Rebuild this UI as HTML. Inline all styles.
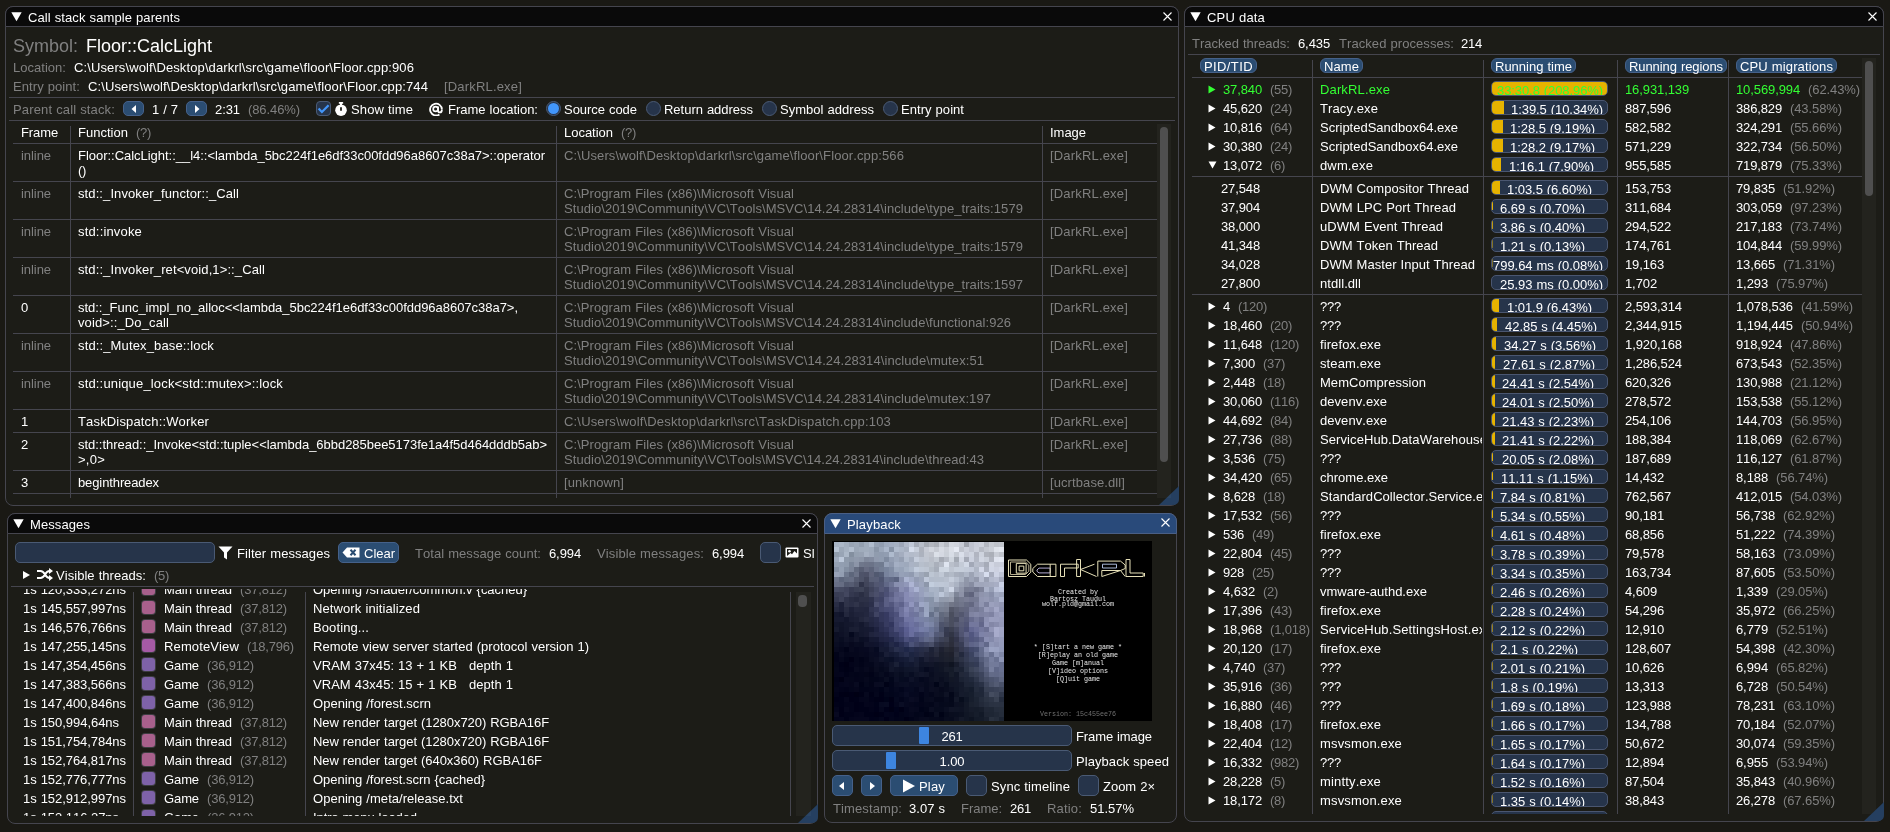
<!DOCTYPE html>
<html><head><meta charset="utf-8"><style>
*{margin:0;padding:0}
html,body{width:1890px;height:832px;overflow:hidden;background:#1a1914}
body{position:relative;font-kerning:none;font-variant-ligatures:none;font-family:"Liberation Sans",sans-serif;font-size:13px;line-height:15px;color:#fff}
#root{position:absolute;left:0;top:0;width:1890px;height:832px;will-change:transform}
.t{position:absolute;white-space:pre}
.r{position:absolute}
.g{color:#808080}
.clip{position:absolute;overflow:hidden}
.win{position:absolute;box-sizing:border-box;border:1px solid #45454e;border-radius:8px;background:#1c1c17}
.tbar{position:absolute;box-sizing:border-box;border:1px solid #45454e;border-radius:8px 8px 0 0}
.btn{position:absolute;box-sizing:border-box;background:#2b4d72;border:1px solid #45618a;border-radius:5px}
.frame{position:absolute;box-sizing:border-box;background:#26344a;border:1px solid #4a5a74;border-radius:5px}
.bar{position:absolute;box-sizing:border-box;width:117px;height:15px;background:#26344a;border:1px solid #4a5670;border-radius:5px;overflow:hidden}
.fill{position:absolute;left:0;top:0;bottom:0;background:#e6b300}
.bt{position:absolute;top:1px;white-space:pre;line-height:15px}
.mono{font-family:"Liberation Mono",monospace;font-size:6.7px;color:#e8e8e8;white-space:pre}
</style></head><body>
<div id="root"><div class="win" style="left:5px;top:6px;width:1174px;height:500px"></div>
<div class="tbar" style="left:5px;top:6px;width:1174px;height:21px;background:#0a0a0a"></div>
<svg class="r" style="left:11px;top:12px" width="11" height="10" viewBox="0 0 11 10"><path d="M0.3 0.2H10.7L5.5 9.3Z" fill="#fff"/></svg>
<div class="t" style="left:28px;top:10px;letter-spacing:0.091px;word-spacing:0.297px">Call stack sample parents</div>
<svg class="r" style="left:1163px;top:12px" width="10" height="10" viewBox="0 0 10 10"><path d="M0.5 0.5L8.5 8.5M8.5 0.5L0.5 8.5" stroke="#fff" stroke-width="1.1"/></svg>
<svg class="r" style="left:1159px;top:486px" width="20" height="20" viewBox="0 0 20 20"><path d="M20 0V13Q20 19 13 19H0Z" fill="#253f60"/></svg>
<div class="t" style="left:13px;top:36px;color:#808080;font-size:18px;line-height:20px">Symbol:</div>
<div class="t" style="left:86px;top:36px;font-size:18px;line-height:20px">Floor::CalcLight</div>
<div class="t" style="left:13px;top:60px;letter-spacing:0.026px;color:#808080">Location:</div>
<div class="t" style="left:74px;top:60px;letter-spacing:0.109px">C:\Users\wolf\Desktop\darkrl\src\game\floor\Floor.cpp:906</div>
<div class="t" style="left:13px;top:79px;letter-spacing:0.078px;word-spacing:0.310px;color:#808080">Entry point:</div>
<div class="t" style="left:88px;top:79px;letter-spacing:0.109px">C:\Users\wolf\Desktop\darkrl\src\game\floor\Floor.cpp:744</div>
<div class="t" style="left:444px;top:79px;letter-spacing:0.178px;color:#808080">[DarkRL.exe]</div>
<div class="r" style="left:9px;top:97px;width:1166px;height:1px;background:#45454e;"></div>
<div class="t" style="left:13px;top:102px;letter-spacing:0.140px;word-spacing:0.248px;color:#808080">Parent call stack:</div>
<div class="btn" style="left:123px;top:101px;width:21px;height:15px"></div>
<svg class="r" style="left:129.5px;top:103.5px" width="8" height="10" viewBox="0 0 8 10"><path d="M1.5 5L6 1V9Z" fill="#fff"/></svg>
<div class="t" style="left:152px;top:102px;letter-spacing:-0.024px;word-spacing:0.412px">1 / 7</div>
<div class="btn" style="left:186px;top:101px;width:21px;height:15px"></div>
<svg class="r" style="left:192.5px;top:103.5px" width="8" height="10" viewBox="0 0 8 10"><path d="M6.5 5L2 1V9Z" fill="#fff"/></svg>
<div class="t" style="left:215px;top:102px;letter-spacing:-0.075px">2:31</div>
<div class="t" style="left:248px;top:102px;letter-spacing:-0.094px;color:#808080">(86.46%)</div>
<div class="frame" style="left:316px;top:101px;width:15px;height:15px;border-radius:4px"></div>
<svg class="r" style="left:316px;top:101px" width="15" height="15" viewBox="0 0 15 15"><path d="M2.6 7.6L5.9 11L12.6 4.2" stroke="#4296fa" stroke-width="2.2" fill="none"/></svg>
<svg class="r" style="left:335px;top:102px" width="12" height="14" viewBox="0 0 12 14"><rect x="3.8" y="0" width="4.4" height="1.8" rx="0.5" fill="#fff"/><rect x="5" y="1" width="2" height="2.6" fill="#fff"/><circle cx="6" cy="8.2" r="5.8" fill="#fff"/><path d="M6 5.2V8.8" stroke="#1c1c17" stroke-width="1.8"/></svg>
<div class="t" style="left:351px;top:102px;letter-spacing:0.115px;word-spacing:0.273px">Show time</div>
<svg class="r" style="left:429px;top:102px" width="14" height="14" viewBox="0 0 14 14"><path d="M10.4 12.4A5.9 5.9 0 1 1 12.9 7.4" stroke="#fff" stroke-width="1.8" fill="none"/><circle cx="6.6" cy="7" r="2.4" stroke="#fff" stroke-width="1.7" fill="none"/><path d="M9.1 4.4V8.4Q9.1 10.4 10.9 10.4Q12.9 10.4 12.9 7.4" stroke="#fff" stroke-width="1.8" fill="none"/></svg>
<div class="t" style="left:448px;top:102px;word-spacing:0.387px">Frame location:</div>
<div class="frame" style="left:546px;top:101px;width:15px;height:15px;border-radius:50%"></div>
<div class="r" style="left:548px;top:103px;width:11px;height:11px;border-radius:50%;background:#4296fa"></div>
<div class="t" style="left:564px;top:102px;letter-spacing:-0.038px;word-spacing:0.426px">Source code</div>
<div class="frame" style="left:646px;top:101px;width:15px;height:15px;border-radius:50%"></div>
<div class="t" style="left:664px;top:102px;letter-spacing:-0.021px;word-spacing:0.409px">Return address</div>
<div class="frame" style="left:762px;top:101px;width:15px;height:15px;border-radius:50%"></div>
<div class="t" style="left:780px;top:102px;letter-spacing:0.031px;word-spacing:0.357px">Symbol address</div>
<div class="frame" style="left:883px;top:101px;width:15px;height:15px;border-radius:50%"></div>
<div class="t" style="left:901px;top:102px;letter-spacing:0.047px;word-spacing:0.341px">Entry point</div>
<div class="r" style="left:9px;top:120px;width:1166px;height:1px;background:#45454e;"></div>
<div class="t" style="left:21px;top:125px;letter-spacing:-0.112px">Frame</div>
<div class="t" style="left:78px;top:125px;letter-spacing:0.017px">Function</div>
<div class="t" style="left:136px;top:125px;letter-spacing:-0.296px;color:#808080">(?)</div>
<div class="t" style="left:564px;top:125px;letter-spacing:-0.019px">Location</div>
<div class="t" style="left:621px;top:125px;letter-spacing:-0.296px;color:#808080">(?)</div>
<div class="t" style="left:1050px;top:125px;letter-spacing:-0.026px">Image</div>
<div class="r" style="left:70px;top:126px;width:1px;height:372px;background:#45454e;"></div>
<div class="r" style="left:556px;top:126px;width:1px;height:372px;background:#45454e;"></div>
<div class="r" style="left:1042px;top:126px;width:1px;height:372px;background:#45454e;"></div>
<div class="r" style="left:13px;top:143px;width:1144px;height:1px;background:#45454e;"></div>
<div class="r" style="left:13px;top:181px;width:1144px;height:1px;background:#45454e;"></div>
<div class="r" style="left:13px;top:219px;width:1144px;height:1px;background:#45454e;"></div>
<div class="r" style="left:13px;top:257px;width:1144px;height:1px;background:#45454e;"></div>
<div class="r" style="left:13px;top:295px;width:1144px;height:1px;background:#45454e;"></div>
<div class="r" style="left:13px;top:333px;width:1144px;height:1px;background:#45454e;"></div>
<div class="r" style="left:13px;top:371px;width:1144px;height:1px;background:#45454e;"></div>
<div class="r" style="left:13px;top:409px;width:1144px;height:1px;background:#45454e;"></div>
<div class="r" style="left:13px;top:432px;width:1144px;height:1px;background:#45454e;"></div>
<div class="r" style="left:13px;top:470px;width:1144px;height:1px;background:#45454e;"></div>
<div class="r" style="left:13px;top:493px;width:1144px;height:1px;background:#45454e;"></div>
<div class="t" style="left:21px;top:148px;letter-spacing:-0.059px;color:#808080">inline</div>
<div class="t" style="left:78px;top:148px;letter-spacing:-0.028px">Floor::CalcLight::__l4::&lt;lambda_5bc224f1e6df33c00fdd96a8607c38a7&gt;::operator</div>
<div class="t" style="left:78px;top:163px;letter-spacing:-0.329px">()</div>
<div class="t" style="left:564px;top:148px;letter-spacing:0.109px;color:#808080">C:\Users\wolf\Desktop\darkrl\src\game\floor\Floor.cpp:566</div>
<div class="t" style="left:1050px;top:148px;letter-spacing:0.178px;color:#808080">[DarkRL.exe]</div>
<div class="t" style="left:21px;top:186px;letter-spacing:-0.059px;color:#808080">inline</div>
<div class="t" style="left:78px;top:186px;letter-spacing:0.098px">std::_Invoker_functor::_Call</div>
<div class="t" style="left:564px;top:186px;letter-spacing:0.076px;word-spacing:0.312px;color:#808080">C:\Program Files (x86)\Microsoft Visual</div>
<div class="t" style="left:564px;top:201px;letter-spacing:0.072px;color:#808080">Studio\2019\Community\VC\Tools\MSVC\14.24.28314\include\type_traits:1579</div>
<div class="t" style="left:1050px;top:186px;letter-spacing:0.178px;color:#808080">[DarkRL.exe]</div>
<div class="t" style="left:21px;top:224px;letter-spacing:-0.059px;color:#808080">inline</div>
<div class="t" style="left:78px;top:224px;letter-spacing:0.169px">std::invoke</div>
<div class="t" style="left:564px;top:224px;letter-spacing:0.076px;word-spacing:0.312px;color:#808080">C:\Program Files (x86)\Microsoft Visual</div>
<div class="t" style="left:564px;top:239px;letter-spacing:0.072px;color:#808080">Studio\2019\Community\VC\Tools\MSVC\14.24.28314\include\type_traits:1579</div>
<div class="t" style="left:1050px;top:224px;letter-spacing:0.178px;color:#808080">[DarkRL.exe]</div>
<div class="t" style="left:21px;top:262px;letter-spacing:-0.059px;color:#808080">inline</div>
<div class="t" style="left:78px;top:262px;letter-spacing:0.108px">std::_Invoker_ret&lt;void,1&gt;::_Call</div>
<div class="t" style="left:564px;top:262px;letter-spacing:0.076px;word-spacing:0.312px;color:#808080">C:\Program Files (x86)\Microsoft Visual</div>
<div class="t" style="left:564px;top:277px;letter-spacing:0.072px;color:#808080">Studio\2019\Community\VC\Tools\MSVC\14.24.28314\include\type_traits:1597</div>
<div class="t" style="left:1050px;top:262px;letter-spacing:0.178px;color:#808080">[DarkRL.exe]</div>
<div class="t" style="left:21px;top:300px;letter-spacing:-0.230px">0</div>
<div class="t" style="left:78px;top:300px;letter-spacing:-0.030px">std::_Func_impl_no_alloc&lt;&lt;lambda_5bc224f1e6df33c00fdd96a8607c38a7&gt;,</div>
<div class="t" style="left:78px;top:315px;letter-spacing:0.117px">void&gt;::_Do_call</div>
<div class="t" style="left:564px;top:300px;letter-spacing:0.076px;word-spacing:0.312px;color:#808080">C:\Program Files (x86)\Microsoft Visual</div>
<div class="t" style="left:564px;top:315px;letter-spacing:0.068px;color:#808080">Studio\2019\Community\VC\Tools\MSVC\14.24.28314\include\functional:926</div>
<div class="t" style="left:1050px;top:300px;letter-spacing:0.178px;color:#808080">[DarkRL.exe]</div>
<div class="t" style="left:21px;top:338px;letter-spacing:-0.059px;color:#808080">inline</div>
<div class="t" style="left:78px;top:338px;letter-spacing:0.138px">std::_Mutex_base::lock</div>
<div class="t" style="left:564px;top:338px;letter-spacing:0.076px;word-spacing:0.312px;color:#808080">C:\Program Files (x86)\Microsoft Visual</div>
<div class="t" style="left:564px;top:353px;letter-spacing:0.082px;color:#808080">Studio\2019\Community\VC\Tools\MSVC\14.24.28314\include\mutex:51</div>
<div class="t" style="left:1050px;top:338px;letter-spacing:0.178px;color:#808080">[DarkRL.exe]</div>
<div class="t" style="left:21px;top:376px;letter-spacing:-0.059px;color:#808080">inline</div>
<div class="t" style="left:78px;top:376px;letter-spacing:0.163px">std::unique_lock&lt;std::mutex&gt;::lock</div>
<div class="t" style="left:564px;top:376px;letter-spacing:0.076px;word-spacing:0.312px;color:#808080">C:\Program Files (x86)\Microsoft Visual</div>
<div class="t" style="left:564px;top:391px;letter-spacing:0.077px;color:#808080">Studio\2019\Community\VC\Tools\MSVC\14.24.28314\include\mutex:197</div>
<div class="t" style="left:1050px;top:376px;letter-spacing:0.178px;color:#808080">[DarkRL.exe]</div>
<div class="t" style="left:21px;top:414px;letter-spacing:-0.230px">1</div>
<div class="t" style="left:78px;top:414px;letter-spacing:0.157px">TaskDispatch::Worker</div>
<div class="t" style="left:564px;top:414px;letter-spacing:0.172px;color:#808080">C:\Users\wolf\Desktop\darkrl\src\TaskDispatch.cpp:103</div>
<div class="t" style="left:1050px;top:414px;letter-spacing:0.178px;color:#808080">[DarkRL.exe]</div>
<div class="t" style="left:21px;top:437px;letter-spacing:-0.230px">2</div>
<div class="t" style="left:78px;top:437px;letter-spacing:-0.031px">std::thread::_Invoke&lt;std::tuple&lt;&lt;lambda_6bbd285bee5173fe1a4f5d464dddb5ab&gt;</div>
<div class="t" style="left:78px;top:452px;letter-spacing:0.244px">&gt;,0&gt;</div>
<div class="t" style="left:564px;top:437px;letter-spacing:0.076px;word-spacing:0.312px;color:#808080">C:\Program Files (x86)\Microsoft Visual</div>
<div class="t" style="left:564px;top:452px;letter-spacing:0.058px;color:#808080">Studio\2019\Community\VC\Tools\MSVC\14.24.28314\include\thread:43</div>
<div class="t" style="left:1050px;top:437px;letter-spacing:0.178px;color:#808080">[DarkRL.exe]</div>
<div class="t" style="left:21px;top:475px;letter-spacing:-0.230px">3</div>
<div class="t" style="left:78px;top:475px;letter-spacing:-0.108px">beginthreadex</div>
<div class="t" style="left:564px;top:475px;letter-spacing:0.082px;color:#808080">[unknown]</div>
<div class="t" style="left:1050px;top:475px;letter-spacing:0.093px;color:#808080">[ucrtbase.dll]</div>
<div class="r" style="left:1157px;top:124px;width:14px;height:374px;background:rgba(255,255,255,0.03);"></div>
<div class="r" style="left:1160px;top:127px;width:8px;height:335px;background:#4f4f4f;border-radius:4px"></div>
<div class="win" style="left:1184px;top:6px;width:700px;height:816px"></div>
<div class="tbar" style="left:1184px;top:6px;width:700px;height:21px;background:#0a0a0a"></div>
<svg class="r" style="left:1190px;top:12px" width="11" height="10" viewBox="0 0 11 10"><path d="M0.3 0.2H10.7L5.5 9.3Z" fill="#fff"/></svg>
<div class="t" style="left:1207px;top:10px;letter-spacing:0.179px;word-spacing:0.209px">CPU data</div>
<svg class="r" style="left:1868px;top:12px" width="10" height="10" viewBox="0 0 10 10"><path d="M0.5 0.5L8.5 8.5M8.5 0.5L0.5 8.5" stroke="#fff" stroke-width="1.1"/></svg>
<div class="t" style="left:1192px;top:36px;word-spacing:0.384px;color:#808080">Tracked threads:</div>
<div class="t" style="left:1298px;top:36px;letter-spacing:-0.106px">6,435</div>
<div class="t" style="left:1339px;top:36px;letter-spacing:0.069px;word-spacing:0.319px;color:#808080">Tracked processes:</div>
<div class="t" style="left:1461px;top:36px;letter-spacing:-0.230px">214</div>
<div class="r" style="left:1188px;top:54px;width:692px;height:1px;background:#45454e;"></div>
<div class="btn" style="left:1200px;top:58px;width:57px;height:15px;border-radius:6px"></div>
<div class="t" style="left:1204px;top:59px;letter-spacing:0.397px">PID/TID</div>
<div class="btn" style="left:1320px;top:58px;width:43px;height:15px;border-radius:6px"></div>
<div class="t" style="left:1324px;top:59px;letter-spacing:0.081px">Name</div>
<div class="btn" style="left:1491px;top:58px;width:85px;height:15px;border-radius:6px"></div>
<div class="t" style="left:1495px;top:59px;word-spacing:0.387px">Running time</div>
<div class="btn" style="left:1625px;top:58px;width:102px;height:15px;border-radius:6px"></div>
<div class="t" style="left:1629px;top:59px;letter-spacing:-0.076px;word-spacing:0.464px">Running regions</div>
<div class="btn" style="left:1736px;top:58px;width:101px;height:15px;border-radius:6px"></div>
<div class="t" style="left:1740px;top:59px;letter-spacing:0.122px;word-spacing:0.266px">CPU migrations</div>
<div class="r" style="left:1312px;top:60px;width:1px;height:754px;background:#45454e;"></div>
<div class="r" style="left:1483px;top:60px;width:1px;height:754px;background:#45454e;"></div>
<div class="r" style="left:1617px;top:60px;width:1px;height:754px;background:#45454e;"></div>
<div class="r" style="left:1728px;top:60px;width:1px;height:754px;background:#45454e;"></div>
<div class="r" style="left:1192px;top:77px;width:670px;height:1px;background:#45454e;"></div>
<div class="r" style="left:1192px;top:176px;width:670px;height:1px;background:#45454e;"></div>
<div class="r" style="left:1192px;top:294px;width:670px;height:1px;background:#45454e;"></div>
<div class="r" style="left:1862px;top:58px;width:14px;height:756px;background:rgba(255,255,255,0.03);"></div>
<div class="r" style="left:1865px;top:61px;width:8px;height:135px;background:#4f4f4f;border-radius:4px"></div>
<svg class="r" style="left:1864px;top:802px" width="20" height="20" viewBox="0 0 20 20"><path d="M20 0V13Q20 19 13 19H0Z" fill="#253f60"/></svg>
<svg class="r" style="left:1208px;top:85px" width="8" height="9" viewBox="0 0 8 9"><path d="M0.5 0.5L7.5 4.5L0.5 8.5Z" fill="#33ff33"/></svg>
<div class="t" style="left:1223px;top:82px"><span style="letter-spacing:-0.127px;color:#33ff33">37,840</span><span class="g" style="letter-spacing:-0.280px;margin-left:8px">(55)</span></div>
<div class="t" style="left:1320px;top:82px;width:162px;overflow:hidden;letter-spacing:0.136px;color:#33ff33">DarkRL.exe</div>
<div class="bar" style="left:1491px;top:81px"><div class="fill" style="width:115.00px"></div><div class="bt" style="left:5px;letter-spacing:-0.085px;word-spacing:0.473px;color:#33ff33">33:30.8 (208.96%)</div></div>
<div class="t" style="left:1625px;top:82px;letter-spacing:-0.106px;color:#33ff33">16,931,139</div>
<div class="t" style="left:1736px;top:82px"><span style="letter-spacing:-0.106px;color:#33ff33">10,569,994</span><span class="g" style="letter-spacing:-0.094px;margin-left:8px">(62.43%)</span></div>
<svg class="r" style="left:1208px;top:104px" width="8" height="9" viewBox="0 0 8 9"><path d="M0.5 0.5L7.5 4.5L0.5 8.5Z" fill="#fff"/></svg>
<div class="t" style="left:1223px;top:101px"><span style="letter-spacing:-0.127px;">45,620</span><span class="g" style="letter-spacing:-0.280px;margin-left:8px">(24)</span></div>
<div class="t" style="left:1320px;top:101px;width:162px;overflow:hidden;letter-spacing:0.103px;">Tracy.exe</div>
<div class="bar" style="left:1491px;top:100px"><div class="fill" style="width:11.89px"></div><div class="bt" style="left:19px;letter-spacing:-0.064px;word-spacing:0.452px;">1:39.5 (10.34%)</div></div>
<div class="t" style="left:1625px;top:101px;letter-spacing:-0.142px">887,596</div>
<div class="t" style="left:1736px;top:101px"><span style="letter-spacing:-0.142px;">386,829</span><span class="g" style="letter-spacing:-0.094px;margin-left:8px">(43.58%)</span></div>
<svg class="r" style="left:1208px;top:123px" width="8" height="9" viewBox="0 0 8 9"><path d="M0.5 0.5L7.5 4.5L0.5 8.5Z" fill="#fff"/></svg>
<div class="t" style="left:1223px;top:120px"><span style="letter-spacing:-0.127px;">10,816</span><span class="g" style="letter-spacing:-0.280px;margin-left:8px">(64)</span></div>
<div class="t" style="left:1320px;top:120px;width:162px;overflow:hidden;">ScriptedSandbox64.exe</div>
<div class="bar" style="left:1491px;top:119px"><div class="fill" style="width:10.57px"></div><div class="bt" style="left:18px;letter-spacing:-0.051px;word-spacing:0.439px;">1:28.5 (9.19%)</div></div>
<div class="t" style="left:1625px;top:120px;letter-spacing:-0.142px">582,582</div>
<div class="t" style="left:1736px;top:120px"><span style="letter-spacing:-0.142px;">324,291</span><span class="g" style="letter-spacing:-0.094px;margin-left:8px">(55.66%)</span></div>
<svg class="r" style="left:1208px;top:142px" width="8" height="9" viewBox="0 0 8 9"><path d="M0.5 0.5L7.5 4.5L0.5 8.5Z" fill="#fff"/></svg>
<div class="t" style="left:1223px;top:139px"><span style="letter-spacing:-0.127px;">30,380</span><span class="g" style="letter-spacing:-0.280px;margin-left:8px">(24)</span></div>
<div class="t" style="left:1320px;top:139px;width:162px;overflow:hidden;">ScriptedSandbox64.exe</div>
<div class="bar" style="left:1491px;top:138px"><div class="fill" style="width:10.55px"></div><div class="bt" style="left:18px;letter-spacing:-0.051px;word-spacing:0.439px;">1:28.2 (9.17%)</div></div>
<div class="t" style="left:1625px;top:139px;letter-spacing:-0.142px">571,229</div>
<div class="t" style="left:1736px;top:139px"><span style="letter-spacing:-0.142px;">322,734</span><span class="g" style="letter-spacing:-0.094px;margin-left:8px">(56.50%)</span></div>
<svg class="r" style="left:1208px;top:161px" width="9" height="8" viewBox="0 0 9 8"><path d="M0.5 0.5H8.5L4.5 7.5Z" fill="#fff"/></svg>
<div class="t" style="left:1223px;top:158px"><span style="letter-spacing:-0.127px;">13,072</span><span class="g" style="letter-spacing:-0.296px;margin-left:8px">(6)</span></div>
<div class="t" style="left:1320px;top:158px;width:162px;overflow:hidden;letter-spacing:0.140px;">dwm.exe</div>
<div class="bar" style="left:1491px;top:157px"><div class="fill" style="width:9.09px"></div><div class="bt" style="left:17px;letter-spacing:-0.051px;word-spacing:0.439px;">1:16.1 (7.90%)</div></div>
<div class="t" style="left:1625px;top:158px;letter-spacing:-0.142px">955,585</div>
<div class="t" style="left:1736px;top:158px"><span style="letter-spacing:-0.142px;">719,879</span><span class="g" style="letter-spacing:-0.094px;margin-left:8px">(75.33%)</span></div>
<div class="t" style="left:1221px;top:181px;letter-spacing:-0.127px">27,548</div>
<div class="t" style="left:1320px;top:181px;width:162px;overflow:hidden;letter-spacing:0.045px;word-spacing:0.343px;">DWM Compositor Thread</div>
<div class="bar" style="left:1491px;top:180px"><div class="fill" style="width:7.59px"></div><div class="bt" style="left:15px;letter-spacing:-0.051px;word-spacing:0.439px;">1:03.5 (6.60%)</div></div>
<div class="t" style="left:1625px;top:181px;letter-spacing:-0.142px">153,753</div>
<div class="t" style="left:1736px;top:181px"><span style="letter-spacing:-0.127px;">79,835</span><span class="g" style="letter-spacing:-0.094px;margin-left:8px">(51.92%)</span></div>
<div class="t" style="left:1221px;top:200px;letter-spacing:-0.127px">37,904</div>
<div class="t" style="left:1320px;top:200px;width:162px;overflow:hidden;letter-spacing:0.074px;word-spacing:0.314px;">DWM LPC Port Thread</div>
<div class="bar" style="left:1491px;top:199px"><div class="r" style="left:0;top:2px;width:1px;height:8px;background:#e6b300;opacity:1.00"></div><div class="bt" style="left:8px;letter-spacing:-0.027px;word-spacing:0.415px;">6.69 s (0.70%)</div></div>
<div class="t" style="left:1625px;top:200px;letter-spacing:-0.142px">311,684</div>
<div class="t" style="left:1736px;top:200px"><span style="letter-spacing:-0.142px;">303,059</span><span class="g" style="letter-spacing:-0.094px;margin-left:8px">(97.23%)</span></div>
<div class="t" style="left:1221px;top:219px;letter-spacing:-0.127px">38,000</div>
<div class="t" style="left:1320px;top:219px;width:162px;overflow:hidden;letter-spacing:0.057px;word-spacing:0.332px;">uDWM Event Thread</div>
<div class="bar" style="left:1491px;top:218px"><div class="r" style="left:0;top:2px;width:1px;height:8px;background:#e6b300;opacity:0.81"></div><div class="bt" style="left:8px;letter-spacing:-0.027px;word-spacing:0.415px;">3.86 s (0.40%)</div></div>
<div class="t" style="left:1625px;top:219px;letter-spacing:-0.142px">294,522</div>
<div class="t" style="left:1736px;top:219px"><span style="letter-spacing:-0.142px;">217,183</span><span class="g" style="letter-spacing:-0.094px;margin-left:8px">(73.74%)</span></div>
<div class="t" style="left:1221px;top:238px;letter-spacing:-0.127px">41,348</div>
<div class="t" style="left:1320px;top:238px;width:162px;overflow:hidden;letter-spacing:0.014px;word-spacing:0.374px;">DWM Token Thread</div>
<div class="bar" style="left:1491px;top:237px"><div class="r" style="left:0;top:2px;width:1px;height:8px;background:#e6b300;opacity:0.50"></div><div class="bt" style="left:8px;letter-spacing:-0.027px;word-spacing:0.415px;">1.21 s (0.13%)</div></div>
<div class="t" style="left:1625px;top:238px;letter-spacing:-0.142px">174,761</div>
<div class="t" style="left:1736px;top:238px"><span style="letter-spacing:-0.142px;">104,844</span><span class="g" style="letter-spacing:-0.094px;margin-left:8px">(59.99%)</span></div>
<div class="t" style="left:1221px;top:257px;letter-spacing:-0.127px">34,028</div>
<div class="t" style="left:1320px;top:257px;width:162px;overflow:hidden;letter-spacing:0.034px;word-spacing:0.354px;">DWM Master Input Thread</div>
<div class="bar" style="left:1491px;top:256px"><div class="r" style="left:0;top:2px;width:1px;height:8px;background:#e6b300;opacity:0.44"></div><div class="bt" style="left:1px;letter-spacing:-0.041px;word-spacing:0.429px;">799.64 ms (0.08%)</div></div>
<div class="t" style="left:1625px;top:257px;letter-spacing:-0.127px">19,163</div>
<div class="t" style="left:1736px;top:257px"><span style="letter-spacing:-0.127px;">13,665</span><span class="g" style="letter-spacing:-0.094px;margin-left:8px">(71.31%)</span></div>
<div class="t" style="left:1221px;top:276px;letter-spacing:-0.127px">27,800</div>
<div class="t" style="left:1320px;top:276px;width:162px;overflow:hidden;letter-spacing:0.059px;">ntdll.dll</div>
<div class="bar" style="left:1491px;top:275px"><div class="bt" style="left:8px;letter-spacing:-0.027px;word-spacing:0.415px;">25.93 ms (0.00%)</div></div>
<div class="t" style="left:1625px;top:276px;letter-spacing:-0.106px">1,702</div>
<div class="t" style="left:1736px;top:276px"><span style="letter-spacing:-0.106px;">1,293</span><span class="g" style="letter-spacing:-0.094px;margin-left:8px">(75.97%)</span></div>
<svg class="r" style="left:1208px;top:302px" width="8" height="9" viewBox="0 0 8 9"><path d="M0.5 0.5L7.5 4.5L0.5 8.5Z" fill="#fff"/></svg>
<div class="t" style="left:1223px;top:299px"><span style="letter-spacing:-0.230px;">4</span><span class="g" style="letter-spacing:-0.270px;margin-left:8px">(120)</span></div>
<div class="t" style="left:1320px;top:299px;width:162px;overflow:hidden;letter-spacing:-0.230px;">???</div>
<div class="bar" style="left:1491px;top:298px"><div class="fill" style="width:7.39px"></div><div class="bt" style="left:15px;letter-spacing:-0.051px;word-spacing:0.439px;">1:01.9 (6.43%)</div></div>
<div class="t" style="left:1625px;top:299px;letter-spacing:-0.093px">2,593,314</div>
<div class="t" style="left:1736px;top:299px"><span style="letter-spacing:-0.093px;">1,078,536</span><span class="g" style="letter-spacing:-0.094px;margin-left:8px">(41.59%)</span></div>
<svg class="r" style="left:1208px;top:321px" width="8" height="9" viewBox="0 0 8 9"><path d="M0.5 0.5L7.5 4.5L0.5 8.5Z" fill="#fff"/></svg>
<div class="t" style="left:1223px;top:318px"><span style="letter-spacing:-0.127px;">18,460</span><span class="g" style="letter-spacing:-0.280px;margin-left:8px">(20)</span></div>
<div class="t" style="left:1320px;top:318px;width:162px;overflow:hidden;letter-spacing:-0.230px;">???</div>
<div class="bar" style="left:1491px;top:317px"><div class="fill" style="width:5.12px"></div><div class="bt" style="left:13px;letter-spacing:-0.042px;word-spacing:0.431px;">42.85 s (4.45%)</div></div>
<div class="t" style="left:1625px;top:318px;letter-spacing:-0.093px">2,344,915</div>
<div class="t" style="left:1736px;top:318px"><span style="letter-spacing:-0.093px;">1,194,445</span><span class="g" style="letter-spacing:-0.094px;margin-left:8px">(50.94%)</span></div>
<svg class="r" style="left:1208px;top:340px" width="8" height="9" viewBox="0 0 8 9"><path d="M0.5 0.5L7.5 4.5L0.5 8.5Z" fill="#fff"/></svg>
<div class="t" style="left:1223px;top:337px"><span style="letter-spacing:-0.127px;">11,648</span><span class="g" style="letter-spacing:-0.270px;margin-left:8px">(120)</span></div>
<div class="t" style="left:1320px;top:337px;width:162px;overflow:hidden;letter-spacing:0.093px;">firefox.exe</div>
<div class="bar" style="left:1491px;top:336px"><div class="fill" style="width:4.09px"></div><div class="bt" style="left:12px;letter-spacing:-0.042px;word-spacing:0.431px;">34.27 s (3.56%)</div></div>
<div class="t" style="left:1625px;top:337px;letter-spacing:-0.093px">1,920,168</div>
<div class="t" style="left:1736px;top:337px"><span style="letter-spacing:-0.142px;">918,924</span><span class="g" style="letter-spacing:-0.094px;margin-left:8px">(47.86%)</span></div>
<svg class="r" style="left:1208px;top:359px" width="8" height="9" viewBox="0 0 8 9"><path d="M0.5 0.5L7.5 4.5L0.5 8.5Z" fill="#fff"/></svg>
<div class="t" style="left:1223px;top:356px"><span style="letter-spacing:-0.106px;">7,300</span><span class="g" style="letter-spacing:-0.280px;margin-left:8px">(37)</span></div>
<div class="t" style="left:1320px;top:356px;width:162px;overflow:hidden;letter-spacing:0.114px;">steam.exe</div>
<div class="bar" style="left:1491px;top:355px"><div class="fill" style="width:3.30px"></div><div class="bt" style="left:11px;letter-spacing:-0.042px;word-spacing:0.431px;">27.61 s (2.87%)</div></div>
<div class="t" style="left:1625px;top:356px;letter-spacing:-0.093px">1,286,524</div>
<div class="t" style="left:1736px;top:356px"><span style="letter-spacing:-0.142px;">673,543</span><span class="g" style="letter-spacing:-0.094px;margin-left:8px">(52.35%)</span></div>
<svg class="r" style="left:1208px;top:378px" width="8" height="9" viewBox="0 0 8 9"><path d="M0.5 0.5L7.5 4.5L0.5 8.5Z" fill="#fff"/></svg>
<div class="t" style="left:1223px;top:375px"><span style="letter-spacing:-0.106px;">2,448</span><span class="g" style="letter-spacing:-0.280px;margin-left:8px">(18)</span></div>
<div class="t" style="left:1320px;top:375px;width:162px;overflow:hidden;letter-spacing:0.038px;">MemCompression</div>
<div class="bar" style="left:1491px;top:374px"><div class="fill" style="width:2.92px"></div><div class="bt" style="left:10px;letter-spacing:-0.042px;word-spacing:0.431px;">24.41 s (2.54%)</div></div>
<div class="t" style="left:1625px;top:375px;letter-spacing:-0.142px">620,326</div>
<div class="t" style="left:1736px;top:375px"><span style="letter-spacing:-0.142px;">130,988</span><span class="g" style="letter-spacing:-0.094px;margin-left:8px">(21.12%)</span></div>
<svg class="r" style="left:1208px;top:397px" width="8" height="9" viewBox="0 0 8 9"><path d="M0.5 0.5L7.5 4.5L0.5 8.5Z" fill="#fff"/></svg>
<div class="t" style="left:1223px;top:394px"><span style="letter-spacing:-0.127px;">30,060</span><span class="g" style="letter-spacing:-0.270px;margin-left:8px">(116)</span></div>
<div class="t" style="left:1320px;top:394px;width:162px;overflow:hidden;letter-spacing:0.051px;">devenv.exe</div>
<div class="bar" style="left:1491px;top:393px"><div class="fill" style="width:2.88px"></div><div class="bt" style="left:10px;letter-spacing:-0.042px;word-spacing:0.431px;">24.01 s (2.50%)</div></div>
<div class="t" style="left:1625px;top:394px;letter-spacing:-0.142px">278,572</div>
<div class="t" style="left:1736px;top:394px"><span style="letter-spacing:-0.142px;">153,538</span><span class="g" style="letter-spacing:-0.094px;margin-left:8px">(55.12%)</span></div>
<svg class="r" style="left:1208px;top:416px" width="8" height="9" viewBox="0 0 8 9"><path d="M0.5 0.5L7.5 4.5L0.5 8.5Z" fill="#fff"/></svg>
<div class="t" style="left:1223px;top:413px"><span style="letter-spacing:-0.127px;">44,692</span><span class="g" style="letter-spacing:-0.280px;margin-left:8px">(84)</span></div>
<div class="t" style="left:1320px;top:413px;width:162px;overflow:hidden;letter-spacing:0.051px;">devenv.exe</div>
<div class="bar" style="left:1491px;top:412px"><div class="fill" style="width:2.56px"></div><div class="bt" style="left:10px;letter-spacing:-0.042px;word-spacing:0.431px;">21.43 s (2.23%)</div></div>
<div class="t" style="left:1625px;top:413px;letter-spacing:-0.142px">254,106</div>
<div class="t" style="left:1736px;top:413px"><span style="letter-spacing:-0.142px;">144,703</span><span class="g" style="letter-spacing:-0.094px;margin-left:8px">(56.95%)</span></div>
<svg class="r" style="left:1208px;top:435px" width="8" height="9" viewBox="0 0 8 9"><path d="M0.5 0.5L7.5 4.5L0.5 8.5Z" fill="#fff"/></svg>
<div class="t" style="left:1223px;top:432px"><span style="letter-spacing:-0.127px;">27,736</span><span class="g" style="letter-spacing:-0.280px;margin-left:8px">(88)</span></div>
<div class="t" style="left:1320px;top:432px;width:162px;overflow:hidden;letter-spacing:0.092px;">ServiceHub.DataWarehouseHost.exe</div>
<div class="bar" style="left:1491px;top:431px"><div class="fill" style="width:2.55px"></div><div class="bt" style="left:10px;letter-spacing:-0.042px;word-spacing:0.431px;">21.41 s (2.22%)</div></div>
<div class="t" style="left:1625px;top:432px;letter-spacing:-0.142px">188,384</div>
<div class="t" style="left:1736px;top:432px"><span style="letter-spacing:-0.142px;">118,069</span><span class="g" style="letter-spacing:-0.094px;margin-left:8px">(62.67%)</span></div>
<svg class="r" style="left:1208px;top:454px" width="8" height="9" viewBox="0 0 8 9"><path d="M0.5 0.5L7.5 4.5L0.5 8.5Z" fill="#fff"/></svg>
<div class="t" style="left:1223px;top:451px"><span style="letter-spacing:-0.106px;">3,536</span><span class="g" style="letter-spacing:-0.280px;margin-left:8px">(75)</span></div>
<div class="t" style="left:1320px;top:451px;width:162px;overflow:hidden;letter-spacing:-0.230px;">???</div>
<div class="bar" style="left:1491px;top:450px"><div class="r" style="left:0;top:2px;width:1px;height:8px;background:#e6b300;opacity:1.00"></div><div class="bt" style="left:10px;letter-spacing:-0.042px;word-spacing:0.431px;">20.05 s (2.08%)</div></div>
<div class="t" style="left:1625px;top:451px;letter-spacing:-0.142px">187,689</div>
<div class="t" style="left:1736px;top:451px"><span style="letter-spacing:-0.142px;">116,127</span><span class="g" style="letter-spacing:-0.094px;margin-left:8px">(61.87%)</span></div>
<svg class="r" style="left:1208px;top:473px" width="8" height="9" viewBox="0 0 8 9"><path d="M0.5 0.5L7.5 4.5L0.5 8.5Z" fill="#fff"/></svg>
<div class="t" style="left:1223px;top:470px"><span style="letter-spacing:-0.127px;">34,420</span><span class="g" style="letter-spacing:-0.280px;margin-left:8px">(65)</span></div>
<div class="t" style="left:1320px;top:470px;width:162px;overflow:hidden;letter-spacing:0.008px;">chrome.exe</div>
<div class="bar" style="left:1491px;top:469px"><div class="r" style="left:0;top:2px;width:1px;height:8px;background:#e6b300;opacity:1.00"></div><div class="bt" style="left:9px;letter-spacing:-0.042px;word-spacing:0.431px;">11.11 s (1.15%)</div></div>
<div class="t" style="left:1625px;top:470px;letter-spacing:-0.127px">14,432</div>
<div class="t" style="left:1736px;top:470px"><span style="letter-spacing:-0.106px;">8,188</span><span class="g" style="letter-spacing:-0.094px;margin-left:8px">(56.74%)</span></div>
<svg class="r" style="left:1208px;top:492px" width="8" height="9" viewBox="0 0 8 9"><path d="M0.5 0.5L7.5 4.5L0.5 8.5Z" fill="#fff"/></svg>
<div class="t" style="left:1223px;top:489px"><span style="letter-spacing:-0.106px;">8,628</span><span class="g" style="letter-spacing:-0.280px;margin-left:8px">(18)</span></div>
<div class="t" style="left:1320px;top:489px;width:162px;overflow:hidden;letter-spacing:0.049px;">StandardCollector.Service.exe</div>
<div class="bar" style="left:1491px;top:488px"><div class="r" style="left:0;top:2px;width:1px;height:8px;background:#e6b300;opacity:1.00"></div><div class="bt" style="left:8px;letter-spacing:-0.027px;word-spacing:0.415px;">7.84 s (0.81%)</div></div>
<div class="t" style="left:1625px;top:489px;letter-spacing:-0.142px">762,567</div>
<div class="t" style="left:1736px;top:489px"><span style="letter-spacing:-0.142px;">412,015</span><span class="g" style="letter-spacing:-0.094px;margin-left:8px">(54.03%)</span></div>
<svg class="r" style="left:1208px;top:511px" width="8" height="9" viewBox="0 0 8 9"><path d="M0.5 0.5L7.5 4.5L0.5 8.5Z" fill="#fff"/></svg>
<div class="t" style="left:1223px;top:508px"><span style="letter-spacing:-0.127px;">17,532</span><span class="g" style="letter-spacing:-0.280px;margin-left:8px">(56)</span></div>
<div class="t" style="left:1320px;top:508px;width:162px;overflow:hidden;letter-spacing:-0.230px;">???</div>
<div class="bar" style="left:1491px;top:507px"><div class="r" style="left:0;top:2px;width:1px;height:8px;background:#e6b300;opacity:0.98"></div><div class="bt" style="left:8px;letter-spacing:-0.027px;word-spacing:0.415px;">5.34 s (0.55%)</div></div>
<div class="t" style="left:1625px;top:508px;letter-spacing:-0.127px">90,181</div>
<div class="t" style="left:1736px;top:508px"><span style="letter-spacing:-0.127px;">56,738</span><span class="g" style="letter-spacing:-0.094px;margin-left:8px">(62.92%)</span></div>
<svg class="r" style="left:1208px;top:530px" width="8" height="9" viewBox="0 0 8 9"><path d="M0.5 0.5L7.5 4.5L0.5 8.5Z" fill="#fff"/></svg>
<div class="t" style="left:1223px;top:527px"><span style="letter-spacing:-0.230px;">536</span><span class="g" style="letter-spacing:-0.280px;margin-left:8px">(49)</span></div>
<div class="t" style="left:1320px;top:527px;width:162px;overflow:hidden;letter-spacing:0.093px;">firefox.exe</div>
<div class="bar" style="left:1491px;top:526px"><div class="r" style="left:0;top:2px;width:1px;height:8px;background:#e6b300;opacity:0.90"></div><div class="bt" style="left:8px;letter-spacing:-0.027px;word-spacing:0.415px;">4.61 s (0.48%)</div></div>
<div class="t" style="left:1625px;top:527px;letter-spacing:-0.127px">68,856</div>
<div class="t" style="left:1736px;top:527px"><span style="letter-spacing:-0.127px;">51,222</span><span class="g" style="letter-spacing:-0.094px;margin-left:8px">(74.39%)</span></div>
<svg class="r" style="left:1208px;top:549px" width="8" height="9" viewBox="0 0 8 9"><path d="M0.5 0.5L7.5 4.5L0.5 8.5Z" fill="#fff"/></svg>
<div class="t" style="left:1223px;top:546px"><span style="letter-spacing:-0.127px;">22,804</span><span class="g" style="letter-spacing:-0.280px;margin-left:8px">(45)</span></div>
<div class="t" style="left:1320px;top:546px;width:162px;overflow:hidden;letter-spacing:-0.230px;">???</div>
<div class="bar" style="left:1491px;top:545px"><div class="r" style="left:0;top:2px;width:1px;height:8px;background:#e6b300;opacity:0.80"></div><div class="bt" style="left:8px;letter-spacing:-0.027px;word-spacing:0.415px;">3.78 s (0.39%)</div></div>
<div class="t" style="left:1625px;top:546px;letter-spacing:-0.127px">79,578</div>
<div class="t" style="left:1736px;top:546px"><span style="letter-spacing:-0.127px;">58,163</span><span class="g" style="letter-spacing:-0.094px;margin-left:8px">(73.09%)</span></div>
<svg class="r" style="left:1208px;top:568px" width="8" height="9" viewBox="0 0 8 9"><path d="M0.5 0.5L7.5 4.5L0.5 8.5Z" fill="#fff"/></svg>
<div class="t" style="left:1223px;top:565px"><span style="letter-spacing:-0.230px;">928</span><span class="g" style="letter-spacing:-0.280px;margin-left:8px">(25)</span></div>
<div class="t" style="left:1320px;top:565px;width:162px;overflow:hidden;letter-spacing:-0.230px;">???</div>
<div class="bar" style="left:1491px;top:564px"><div class="r" style="left:0;top:2px;width:1px;height:8px;background:#e6b300;opacity:0.75"></div><div class="bt" style="left:8px;letter-spacing:-0.027px;word-spacing:0.415px;">3.34 s (0.35%)</div></div>
<div class="t" style="left:1625px;top:565px;letter-spacing:-0.142px">163,734</div>
<div class="t" style="left:1736px;top:565px"><span style="letter-spacing:-0.127px;">87,605</span><span class="g" style="letter-spacing:-0.094px;margin-left:8px">(53.50%)</span></div>
<svg class="r" style="left:1208px;top:587px" width="8" height="9" viewBox="0 0 8 9"><path d="M0.5 0.5L7.5 4.5L0.5 8.5Z" fill="#fff"/></svg>
<div class="t" style="left:1223px;top:584px"><span style="letter-spacing:-0.106px;">4,632</span><span class="g" style="letter-spacing:-0.296px;margin-left:8px">(2)</span></div>
<div class="t" style="left:1320px;top:584px;width:162px;overflow:hidden;">vmware-authd.exe</div>
<div class="bar" style="left:1491px;top:583px"><div class="r" style="left:0;top:2px;width:1px;height:8px;background:#e6b300;opacity:0.65"></div><div class="bt" style="left:8px;letter-spacing:-0.027px;word-spacing:0.415px;">2.46 s (0.26%)</div></div>
<div class="t" style="left:1625px;top:584px;letter-spacing:-0.106px">4,609</div>
<div class="t" style="left:1736px;top:584px"><span style="letter-spacing:-0.106px;">1,339</span><span class="g" style="letter-spacing:-0.094px;margin-left:8px">(29.05%)</span></div>
<svg class="r" style="left:1208px;top:606px" width="8" height="9" viewBox="0 0 8 9"><path d="M0.5 0.5L7.5 4.5L0.5 8.5Z" fill="#fff"/></svg>
<div class="t" style="left:1223px;top:603px"><span style="letter-spacing:-0.127px;">17,396</span><span class="g" style="letter-spacing:-0.280px;margin-left:8px">(43)</span></div>
<div class="t" style="left:1320px;top:603px;width:162px;overflow:hidden;letter-spacing:0.093px;">firefox.exe</div>
<div class="bar" style="left:1491px;top:602px"><div class="r" style="left:0;top:2px;width:1px;height:8px;background:#e6b300;opacity:0.63"></div><div class="bt" style="left:8px;letter-spacing:-0.027px;word-spacing:0.415px;">2.28 s (0.24%)</div></div>
<div class="t" style="left:1625px;top:603px;letter-spacing:-0.127px">54,296</div>
<div class="t" style="left:1736px;top:603px"><span style="letter-spacing:-0.127px;">35,972</span><span class="g" style="letter-spacing:-0.094px;margin-left:8px">(66.25%)</span></div>
<svg class="r" style="left:1208px;top:625px" width="8" height="9" viewBox="0 0 8 9"><path d="M0.5 0.5L7.5 4.5L0.5 8.5Z" fill="#fff"/></svg>
<div class="t" style="left:1223px;top:622px"><span style="letter-spacing:-0.127px;">18,968</span><span class="g" style="letter-spacing:-0.170px;margin-left:8px">(1,018)</span></div>
<div class="t" style="left:1320px;top:622px;width:162px;overflow:hidden;letter-spacing:0.145px;">ServiceHub.SettingsHost.exe</div>
<div class="bar" style="left:1491px;top:621px"><div class="r" style="left:0;top:2px;width:1px;height:8px;background:#e6b300;opacity:0.60"></div><div class="bt" style="left:8px;letter-spacing:-0.027px;word-spacing:0.415px;">2.12 s (0.22%)</div></div>
<div class="t" style="left:1625px;top:622px;letter-spacing:-0.127px">12,910</div>
<div class="t" style="left:1736px;top:622px"><span style="letter-spacing:-0.106px;">6,779</span><span class="g" style="letter-spacing:-0.094px;margin-left:8px">(52.51%)</span></div>
<svg class="r" style="left:1208px;top:644px" width="8" height="9" viewBox="0 0 8 9"><path d="M0.5 0.5L7.5 4.5L0.5 8.5Z" fill="#fff"/></svg>
<div class="t" style="left:1223px;top:641px"><span style="letter-spacing:-0.127px;">20,120</span><span class="g" style="letter-spacing:-0.280px;margin-left:8px">(17)</span></div>
<div class="t" style="left:1320px;top:641px;width:162px;overflow:hidden;letter-spacing:0.093px;">firefox.exe</div>
<div class="bar" style="left:1491px;top:640px"><div class="r" style="left:0;top:2px;width:1px;height:8px;background:#e6b300;opacity:0.60"></div><div class="bt" style="left:8px;letter-spacing:-0.008px;word-spacing:0.396px;">2.1 s (0.22%)</div></div>
<div class="t" style="left:1625px;top:641px;letter-spacing:-0.142px">128,607</div>
<div class="t" style="left:1736px;top:641px"><span style="letter-spacing:-0.127px;">54,398</span><span class="g" style="letter-spacing:-0.094px;margin-left:8px">(42.30%)</span></div>
<svg class="r" style="left:1208px;top:663px" width="8" height="9" viewBox="0 0 8 9"><path d="M0.5 0.5L7.5 4.5L0.5 8.5Z" fill="#fff"/></svg>
<div class="t" style="left:1223px;top:660px"><span style="letter-spacing:-0.106px;">4,740</span><span class="g" style="letter-spacing:-0.280px;margin-left:8px">(37)</span></div>
<div class="t" style="left:1320px;top:660px;width:162px;overflow:hidden;letter-spacing:-0.230px;">???</div>
<div class="bar" style="left:1491px;top:659px"><div class="r" style="left:0;top:2px;width:1px;height:8px;background:#e6b300;opacity:0.59"></div><div class="bt" style="left:8px;letter-spacing:-0.027px;word-spacing:0.415px;">2.01 s (0.21%)</div></div>
<div class="t" style="left:1625px;top:660px;letter-spacing:-0.127px">10,626</div>
<div class="t" style="left:1736px;top:660px"><span style="letter-spacing:-0.106px;">6,994</span><span class="g" style="letter-spacing:-0.094px;margin-left:8px">(65.82%)</span></div>
<svg class="r" style="left:1208px;top:682px" width="8" height="9" viewBox="0 0 8 9"><path d="M0.5 0.5L7.5 4.5L0.5 8.5Z" fill="#fff"/></svg>
<div class="t" style="left:1223px;top:679px"><span style="letter-spacing:-0.127px;">35,916</span><span class="g" style="letter-spacing:-0.280px;margin-left:8px">(36)</span></div>
<div class="t" style="left:1320px;top:679px;width:162px;overflow:hidden;letter-spacing:-0.230px;">???</div>
<div class="bar" style="left:1491px;top:678px"><div class="r" style="left:0;top:2px;width:1px;height:8px;background:#e6b300;opacity:0.57"></div><div class="bt" style="left:8px;letter-spacing:-0.008px;word-spacing:0.396px;">1.8 s (0.19%)</div></div>
<div class="t" style="left:1625px;top:679px;letter-spacing:-0.127px">13,313</div>
<div class="t" style="left:1736px;top:679px"><span style="letter-spacing:-0.106px;">6,728</span><span class="g" style="letter-spacing:-0.094px;margin-left:8px">(50.54%)</span></div>
<svg class="r" style="left:1208px;top:701px" width="8" height="9" viewBox="0 0 8 9"><path d="M0.5 0.5L7.5 4.5L0.5 8.5Z" fill="#fff"/></svg>
<div class="t" style="left:1223px;top:698px"><span style="letter-spacing:-0.127px;">16,880</span><span class="g" style="letter-spacing:-0.280px;margin-left:8px">(46)</span></div>
<div class="t" style="left:1320px;top:698px;width:162px;overflow:hidden;letter-spacing:-0.230px;">???</div>
<div class="bar" style="left:1491px;top:697px"><div class="r" style="left:0;top:2px;width:1px;height:8px;background:#e6b300;opacity:0.56"></div><div class="bt" style="left:8px;letter-spacing:-0.027px;word-spacing:0.415px;">1.69 s (0.18%)</div></div>
<div class="t" style="left:1625px;top:698px;letter-spacing:-0.142px">123,988</div>
<div class="t" style="left:1736px;top:698px"><span style="letter-spacing:-0.127px;">78,231</span><span class="g" style="letter-spacing:-0.094px;margin-left:8px">(63.10%)</span></div>
<svg class="r" style="left:1208px;top:720px" width="8" height="9" viewBox="0 0 8 9"><path d="M0.5 0.5L7.5 4.5L0.5 8.5Z" fill="#fff"/></svg>
<div class="t" style="left:1223px;top:717px"><span style="letter-spacing:-0.127px;">18,408</span><span class="g" style="letter-spacing:-0.280px;margin-left:8px">(17)</span></div>
<div class="t" style="left:1320px;top:717px;width:162px;overflow:hidden;letter-spacing:0.093px;">firefox.exe</div>
<div class="bar" style="left:1491px;top:716px"><div class="r" style="left:0;top:2px;width:1px;height:8px;background:#e6b300;opacity:0.55"></div><div class="bt" style="left:8px;letter-spacing:-0.027px;word-spacing:0.415px;">1.66 s (0.17%)</div></div>
<div class="t" style="left:1625px;top:717px;letter-spacing:-0.142px">134,788</div>
<div class="t" style="left:1736px;top:717px"><span style="letter-spacing:-0.127px;">70,184</span><span class="g" style="letter-spacing:-0.094px;margin-left:8px">(52.07%)</span></div>
<svg class="r" style="left:1208px;top:739px" width="8" height="9" viewBox="0 0 8 9"><path d="M0.5 0.5L7.5 4.5L0.5 8.5Z" fill="#fff"/></svg>
<div class="t" style="left:1223px;top:736px"><span style="letter-spacing:-0.127px;">22,404</span><span class="g" style="letter-spacing:-0.280px;margin-left:8px">(12)</span></div>
<div class="t" style="left:1320px;top:736px;width:162px;overflow:hidden;letter-spacing:0.165px;">msvsmon.exe</div>
<div class="bar" style="left:1491px;top:735px"><div class="r" style="left:0;top:2px;width:1px;height:8px;background:#e6b300;opacity:0.55"></div><div class="bt" style="left:8px;letter-spacing:-0.027px;word-spacing:0.415px;">1.65 s (0.17%)</div></div>
<div class="t" style="left:1625px;top:736px;letter-spacing:-0.127px">50,672</div>
<div class="t" style="left:1736px;top:736px"><span style="letter-spacing:-0.127px;">30,074</span><span class="g" style="letter-spacing:-0.094px;margin-left:8px">(59.35%)</span></div>
<svg class="r" style="left:1208px;top:758px" width="8" height="9" viewBox="0 0 8 9"><path d="M0.5 0.5L7.5 4.5L0.5 8.5Z" fill="#fff"/></svg>
<div class="t" style="left:1223px;top:755px"><span style="letter-spacing:-0.127px;">16,332</span><span class="g" style="letter-spacing:-0.270px;margin-left:8px">(982)</span></div>
<div class="t" style="left:1320px;top:755px;width:162px;overflow:hidden;letter-spacing:-0.230px;">???</div>
<div class="bar" style="left:1491px;top:754px"><div class="r" style="left:0;top:2px;width:1px;height:8px;background:#e6b300;opacity:0.55"></div><div class="bt" style="left:8px;letter-spacing:-0.027px;word-spacing:0.415px;">1.64 s (0.17%)</div></div>
<div class="t" style="left:1625px;top:755px;letter-spacing:-0.127px">12,894</div>
<div class="t" style="left:1736px;top:755px"><span style="letter-spacing:-0.106px;">6,955</span><span class="g" style="letter-spacing:-0.094px;margin-left:8px">(53.94%)</span></div>
<svg class="r" style="left:1208px;top:777px" width="8" height="9" viewBox="0 0 8 9"><path d="M0.5 0.5L7.5 4.5L0.5 8.5Z" fill="#fff"/></svg>
<div class="t" style="left:1223px;top:774px"><span style="letter-spacing:-0.127px;">28,228</span><span class="g" style="letter-spacing:-0.296px;margin-left:8px">(5)</span></div>
<div class="t" style="left:1320px;top:774px;width:162px;overflow:hidden;letter-spacing:0.176px;">mintty.exe</div>
<div class="bar" style="left:1491px;top:773px"><div class="r" style="left:0;top:2px;width:1px;height:8px;background:#e6b300;opacity:0.53"></div><div class="bt" style="left:8px;letter-spacing:-0.027px;word-spacing:0.415px;">1.52 s (0.16%)</div></div>
<div class="t" style="left:1625px;top:774px;letter-spacing:-0.127px">87,504</div>
<div class="t" style="left:1736px;top:774px"><span style="letter-spacing:-0.127px;">35,843</span><span class="g" style="letter-spacing:-0.094px;margin-left:8px">(40.96%)</span></div>
<svg class="r" style="left:1208px;top:796px" width="8" height="9" viewBox="0 0 8 9"><path d="M0.5 0.5L7.5 4.5L0.5 8.5Z" fill="#fff"/></svg>
<div class="t" style="left:1223px;top:793px"><span style="letter-spacing:-0.127px;">18,172</span><span class="g" style="letter-spacing:-0.296px;margin-left:8px">(8)</span></div>
<div class="t" style="left:1320px;top:793px;width:162px;overflow:hidden;letter-spacing:0.165px;">msvsmon.exe</div>
<div class="bar" style="left:1491px;top:792px"><div class="r" style="left:0;top:2px;width:1px;height:8px;background:#e6b300;opacity:0.51"></div><div class="bt" style="left:8px;letter-spacing:-0.027px;word-spacing:0.415px;">1.35 s (0.14%)</div></div>
<div class="t" style="left:1625px;top:793px;letter-spacing:-0.127px">38,843</div>
<div class="t" style="left:1736px;top:793px"><span style="letter-spacing:-0.127px;">26,278</span><span class="g" style="letter-spacing:-0.094px;margin-left:8px">(67.65%)</span></div>
<div class="r" style="left:1491px;top:811px;width:117px;height:3px;overflow:hidden"><div class="bar" style="left:0;top:0"></div></div>
<div class="win" style="left:7px;top:513px;width:811px;height:311px"></div>
<div class="tbar" style="left:7px;top:513px;width:811px;height:21px;background:#0a0a0a"></div>
<svg class="r" style="left:13px;top:519px" width="11" height="10" viewBox="0 0 11 10"><path d="M0.3 0.2H10.7L5.5 9.3Z" fill="#fff"/></svg>
<div class="t" style="left:30px;top:517px;letter-spacing:0.094px">Messages</div>
<svg class="r" style="left:802px;top:519px" width="10" height="10" viewBox="0 0 10 10"><path d="M0.5 0.5L8.5 8.5M8.5 0.5L0.5 8.5" stroke="#fff" stroke-width="1.1"/></svg>
<svg class="r" style="left:798px;top:804px" width="20" height="20" viewBox="0 0 20 20"><path d="M20 0V13Q20 19 13 19H0Z" fill="#253f60"/></svg>
<div class="frame" style="left:15px;top:542px;width:200px;height:21px"></div>
<svg class="r" style="left:218px;top:546px" width="15" height="14" viewBox="0 0 15 14"><path d="M0.5 0.5H14.5L9 6.5V13.5L6 11.5V6.5Z" fill="#fff"/></svg>
<div class="t" style="left:237px;top:546px;letter-spacing:0.062px;word-spacing:0.327px">Filter messages</div>
<div class="btn" style="left:338px;top:542px;width:61px;height:21px"></div>
<svg class="r" style="left:342px;top:547px" width="18" height="11" viewBox="0 0 18 11"><path d="M5 0.5H17.5V10.5H5L0.5 5.5Z" fill="#fff"/><path d="M8.5 2.8L13.5 8.2M13.5 2.8L8.5 8.2" stroke="#2b4d72" stroke-width="2"/></svg>
<div class="t" style="left:364px;top:546px;letter-spacing:-0.013px">Clear</div>
<div class="t" style="left:415px;top:546px;letter-spacing:0.052px;word-spacing:0.336px;color:#808080">Total message count:</div>
<div class="t" style="left:549px;top:546px;letter-spacing:-0.106px">6,994</div>
<div class="t" style="left:597px;top:546px;letter-spacing:0.115px;word-spacing:0.273px;color:#808080">Visible messages:</div>
<div class="t" style="left:712px;top:546px;letter-spacing:-0.106px">6,994</div>
<div class="frame" style="left:760px;top:542px;width:21px;height:21px"></div>
<svg class="r" style="left:785px;top:547px" width="14" height="11" viewBox="0 0 14 11"><rect x="0.5" y="0.5" width="13" height="10" rx="1" fill="#fff"/><rect x="2" y="2" width="10" height="7" fill="#1c1c17"/><circle cx="4.5" cy="4.3" r="1.3" fill="#fff"/><path d="M2 9L5.5 6L7 7.3L9.5 4L12 6.5V9Z" fill="#fff"/></svg>
<div class="t" style="left:803px;top:546px;width:11px;overflow:hidden">Sl</div>
<svg class="r" style="left:23px;top:571px" width="7" height="8" viewBox="0 0 7 8"><path d="M0 0L7 4L0 8Z" fill="#fff"/></svg>
<svg class="r" style="left:37px;top:568px" width="16" height="13" viewBox="0 0 16 13"><path d="M0 3H3.5Q6 3 8 6.5Q10 10 12.5 10H14M0 10H3.5Q6 10 8 6.5Q10 3 12.5 3H14" stroke="#fff" stroke-width="2" fill="none"/><path d="M12 0L16 3L12 6Z M12 7L16 10L12 13Z" fill="#fff"/></svg>
<div class="t" style="left:56px;top:568px;letter-spacing:0.049px;word-spacing:0.339px">Visible threads:</div>
<div class="t" style="left:154px;top:568px;letter-spacing:-0.296px;color:#808080">(5)</div>
<div class="r" style="left:11px;top:586px;width:803px;height:1px;background:#45454e;"></div>
<div class="clip" style="left:10px;top:589px;width:785px;height:227px">
<div class="t" style="left:13px;top:-7px;letter-spacing:-0.050px;word-spacing:0.438px;">1s 120,333,272ns</div>
<div class="r" style="left:132px;top:-7px;width:13px;height:13px;border-radius:3px;background:#a8608c;box-shadow:0 0 0 1px rgba(90,90,100,0.55)"></div>
<div class="t" style="left:154px;top:-7px"><span style="letter-spacing:-0.104px;word-spacing:0.492px;">Main thread</span><span class="g" style="letter-spacing:-0.177px;margin-left:8px">(37,812)</span></div>
<div class="t" style="left:303px;top:-7px;letter-spacing:-0.022px;word-spacing:0.410px;">Opening /shader/common.v {cached}</div>
<div class="t" style="left:13px;top:12px;letter-spacing:-0.050px;word-spacing:0.438px;">1s 145,557,997ns</div>
<div class="r" style="left:132px;top:12px;width:13px;height:13px;border-radius:3px;background:#a8608c;box-shadow:0 0 0 1px rgba(90,90,100,0.55)"></div>
<div class="t" style="left:154px;top:12px"><span style="letter-spacing:-0.104px;word-spacing:0.492px;">Main thread</span><span class="g" style="letter-spacing:-0.177px;margin-left:8px">(37,812)</span></div>
<div class="t" style="left:303px;top:12px;letter-spacing:0.103px;word-spacing:0.285px;">Network initialized</div>
<div class="t" style="left:13px;top:31px;letter-spacing:-0.050px;word-spacing:0.438px;">1s 146,576,766ns</div>
<div class="r" style="left:132px;top:31px;width:13px;height:13px;border-radius:3px;background:#a8608c;box-shadow:0 0 0 1px rgba(90,90,100,0.55)"></div>
<div class="t" style="left:154px;top:31px"><span style="letter-spacing:-0.104px;word-spacing:0.492px;">Main thread</span><span class="g" style="letter-spacing:-0.177px;margin-left:8px">(37,812)</span></div>
<div class="t" style="left:303px;top:31px;letter-spacing:0.107px;">Booting...</div>
<div class="t" style="left:13px;top:50px;letter-spacing:-0.050px;word-spacing:0.438px;">1s 147,255,145ns</div>
<div class="r" style="left:132px;top:50px;width:13px;height:13px;border-radius:3px;background:#a55aa5;box-shadow:0 0 0 1px rgba(90,90,100,0.55)"></div>
<div class="t" style="left:154px;top:50px"><span style="letter-spacing:0.130px;">RemoteView</span><span class="g" style="letter-spacing:-0.177px;margin-left:8px">(18,796)</span></div>
<div class="t" style="left:303px;top:50px;letter-spacing:0.014px;word-spacing:0.374px;">Remote view server started (protocol version 1)</div>
<div class="t" style="left:13px;top:69px;letter-spacing:-0.050px;word-spacing:0.438px;">1s 147,354,456ns</div>
<div class="r" style="left:132px;top:69px;width:13px;height:13px;border-radius:3px;background:#7e62a8;box-shadow:0 0 0 1px rgba(90,90,100,0.55)"></div>
<div class="t" style="left:154px;top:69px"><span style="letter-spacing:-0.100px;">Game</span><span class="g" style="letter-spacing:-0.177px;margin-left:8px">(36,912)</span></div>
<div class="t" style="left:303px;top:69px;letter-spacing:0.047px;word-spacing:0.342px;">VRAM 37x45: 13 + 1 KB   depth 1</div>
<div class="t" style="left:13px;top:88px;letter-spacing:-0.050px;word-spacing:0.438px;">1s 147,383,566ns</div>
<div class="r" style="left:132px;top:88px;width:13px;height:13px;border-radius:3px;background:#7e62a8;box-shadow:0 0 0 1px rgba(90,90,100,0.55)"></div>
<div class="t" style="left:154px;top:88px"><span style="letter-spacing:-0.100px;">Game</span><span class="g" style="letter-spacing:-0.177px;margin-left:8px">(36,912)</span></div>
<div class="t" style="left:303px;top:88px;letter-spacing:0.047px;word-spacing:0.342px;">VRAM 43x45: 15 + 1 KB   depth 1</div>
<div class="t" style="left:13px;top:107px;letter-spacing:-0.050px;word-spacing:0.438px;">1s 147,400,846ns</div>
<div class="r" style="left:132px;top:107px;width:13px;height:13px;border-radius:3px;background:#7e62a8;box-shadow:0 0 0 1px rgba(90,90,100,0.55)"></div>
<div class="t" style="left:154px;top:107px"><span style="letter-spacing:-0.100px;">Game</span><span class="g" style="letter-spacing:-0.177px;margin-left:8px">(36,912)</span></div>
<div class="t" style="left:303px;top:107px;letter-spacing:0.029px;word-spacing:0.359px;">Opening /forest.scrn</div>
<div class="t" style="left:13px;top:126px;letter-spacing:-0.037px;word-spacing:0.426px;">1s 150,994,64ns</div>
<div class="r" style="left:132px;top:126px;width:13px;height:13px;border-radius:3px;background:#a8608c;box-shadow:0 0 0 1px rgba(90,90,100,0.55)"></div>
<div class="t" style="left:154px;top:126px"><span style="letter-spacing:-0.104px;word-spacing:0.492px;">Main thread</span><span class="g" style="letter-spacing:-0.177px;margin-left:8px">(37,812)</span></div>
<div class="t" style="left:303px;top:126px;letter-spacing:-0.057px;word-spacing:0.446px;">New render target (1280x720) RGBA16F</div>
<div class="t" style="left:13px;top:145px;letter-spacing:-0.050px;word-spacing:0.438px;">1s 151,754,784ns</div>
<div class="r" style="left:132px;top:145px;width:13px;height:13px;border-radius:3px;background:#a8608c;box-shadow:0 0 0 1px rgba(90,90,100,0.55)"></div>
<div class="t" style="left:154px;top:145px"><span style="letter-spacing:-0.104px;word-spacing:0.492px;">Main thread</span><span class="g" style="letter-spacing:-0.177px;margin-left:8px">(37,812)</span></div>
<div class="t" style="left:303px;top:145px;letter-spacing:-0.057px;word-spacing:0.446px;">New render target (1280x720) RGBA16F</div>
<div class="t" style="left:13px;top:164px;letter-spacing:-0.050px;word-spacing:0.438px;">1s 152,764,817ns</div>
<div class="r" style="left:132px;top:164px;width:13px;height:13px;border-radius:3px;background:#a8608c;box-shadow:0 0 0 1px rgba(90,90,100,0.55)"></div>
<div class="t" style="left:154px;top:164px"><span style="letter-spacing:-0.104px;word-spacing:0.492px;">Main thread</span><span class="g" style="letter-spacing:-0.177px;margin-left:8px">(37,812)</span></div>
<div class="t" style="left:303px;top:164px;letter-spacing:-0.052px;word-spacing:0.440px;">New render target (640x360) RGBA16F</div>
<div class="t" style="left:13px;top:183px;letter-spacing:-0.050px;word-spacing:0.438px;">1s 152,776,777ns</div>
<div class="r" style="left:132px;top:183px;width:13px;height:13px;border-radius:3px;background:#7e62a8;box-shadow:0 0 0 1px rgba(90,90,100,0.55)"></div>
<div class="t" style="left:154px;top:183px"><span style="letter-spacing:-0.100px;">Game</span><span class="g" style="letter-spacing:-0.177px;margin-left:8px">(36,912)</span></div>
<div class="t" style="left:303px;top:183px;word-spacing:0.390px;">Opening /forest.scrn {cached}</div>
<div class="t" style="left:13px;top:202px;letter-spacing:-0.050px;word-spacing:0.438px;">1s 152,912,997ns</div>
<div class="r" style="left:132px;top:202px;width:13px;height:13px;border-radius:3px;background:#7e62a8;box-shadow:0 0 0 1px rgba(90,90,100,0.55)"></div>
<div class="t" style="left:154px;top:202px"><span style="letter-spacing:-0.100px;">Game</span><span class="g" style="letter-spacing:-0.177px;margin-left:8px">(36,912)</span></div>
<div class="t" style="left:303px;top:202px;letter-spacing:0.031px;word-spacing:0.357px;">Opening /meta/release.txt</div>
<div class="t" style="left:13px;top:221px;letter-spacing:-0.037px;word-spacing:0.426px;">1s 153,116,27ns</div>
<div class="r" style="left:132px;top:221px;width:13px;height:13px;border-radius:3px;background:#7e62a8;box-shadow:0 0 0 1px rgba(90,90,100,0.55)"></div>
<div class="t" style="left:154px;top:221px"><span style="letter-spacing:-0.100px;">Game</span><span class="g" style="letter-spacing:-0.177px;margin-left:8px">(36,912)</span></div>
<div class="t" style="left:303px;top:221px;letter-spacing:-0.105px;word-spacing:0.493px;">Intro menu loaded</div>
<div class="r" style="left:123px;top:3px;width:1px;height:224px;background:#45454e"></div>
<div class="r" style="left:295px;top:3px;width:1px;height:224px;background:#45454e"></div>
</div>
<div class="r" style="left:790px;top:592px;width:1px;height:224px;background:#45454e;"></div>
<div class="r" style="left:796px;top:592px;width:15px;height:224px;background:rgba(255,255,255,0.03);"></div>
<div class="r" style="left:798px;top:595px;width:9px;height:12px;background:#4f4f4f;border-radius:4px"></div>
<div class="win" style="left:824px;top:513px;width:353px;height:310px"></div>
<div class="tbar" style="left:824px;top:513px;width:353px;height:21px;background:#294a7a;border-color:#4a5f85"></div>
<svg class="r" style="left:830px;top:519px" width="11" height="10" viewBox="0 0 11 10"><path d="M0.3 0.2H10.7L5.5 9.3Z" fill="#fff"/></svg>
<div class="t" style="left:847px;top:517px;letter-spacing:0.156px">Playback</div>
<svg class="r" style="left:1161px;top:518px" width="10" height="10" viewBox="0 0 10 10"><path d="M0.5 0.5L8.5 8.5M8.5 0.5L0.5 8.5" stroke="#fff" stroke-width="1.1"/></svg>
<div class="r" style="left:832px;top:541px;width:320px;height:180px;background:#000;overflow:hidden">
<div class="r" style="left:2px;top:1px;width:170px;height:179px;overflow:hidden"><div class="r" style="left:0;top:0px;width:170px;height:5px;background:linear-gradient(90deg,#a8b4c4 0px 5px,#acb8c8 5px 10px,#a3afbf 10px 15px,#98a4b4 15px 20px,#9ca8b8 20px 25px,#939faf 25px 30px,#a0acbc 30px 35px,#b0bccd 35px 40px,#95a1b3 40px 45px,#919db0 45px 50px,#9eaabe 50px 55px,#a2adc1 55px 60px,#a5b0c2 60px 65px,#9da6b7 65px 70px,#b1b9c9 70px 75px,#c1c9d8 75px 80px,#a6acb9 80px 85px,#b8bec9 85px 90px,#a5aab3 90px 95px,#b3b7bf 95px 100px,#abafb7 100px 105px,#c8ccd4 105px 110px,#b8bcc4 110px 115px,#d4d8e0 115px 120px,#d0d4dd 120px 125px,#c8ccd6 125px 130px,#a0a4ae 130px 135px,#bfc3cf 135px 140px,#c8ccd8 140px 145px,#cdd1db 145px 150px,#b3b7c0 150px 155px,#c7cbd3 155px 160px,#bfc3cb 160px 165px,#c2c6ce 165px 170px)"></div><div class="r" style="left:0;top:5px;width:170px;height:5px;background:linear-gradient(90deg,#b7c3d3 0px 5px,#9ca8b8 5px 10px,#a6b2c2 10px 15px,#b2bece 15px 20px,#9ba7b7 20px 25px,#a0acbc 25px 30px,#a1adbd 30px 35px,#9eaabb 35px 40px,#8a96a8 40px 45px,#9ba7ba 45px 50px,#aab6ca 50px 55px,#8793a6 55px 60px,#b0bbcd 60px 65px,#acb6c7 65px 70px,#a7b0c0 70px 75px,#d6ddec 75px 80px,#c7cedb 80px 85px,#adb2bd 85px 90px,#c6cad4 90px 95px,#d2d6de 95px 100px,#c7cbd3 100px 105px,#d7dbe3 105px 110px,#cdd1d9 110px 115px,#dbdfe7 115px 120px,#e6eaf3 120px 125px,#c0c4ce 125px 130px,#cdd1dc 130px 135px,#c0c4d0 135px 140px,#cbcfda 140px 145px,#b7bbc5 145px 150px,#c3c7d0 150px 155px,#cbcfd8 155px 160px,#dfe3eb 160px 165px,#e3e7ef 165px 170px)"></div><div class="r" style="left:0;top:10px;width:170px;height:5px;background:linear-gradient(90deg,#919dad 0px 5px,#98a4b5 5px 10px,#acb8c8 10px 15px,#838f9f 15px 20px,#95a1b1 20px 25px,#97a2b3 25px 30px,#a6b1c2 30px 35px,#9ea9bb 35px 40px,#909cae 40px 45px,#8f9baf 45px 50px,#919db1 50px 55px,#afbbce 55px 60px,#9ba5b8 60px 65px,#a4adbf 65px 70px,#b5bdce 70px 75px,#b3bbca 75px 80px,#b6bdcb 80px 85px,#acb2be 85px 90px,#c2c7d1 90px 95px,#bfc3cc 95px 100px,#dbe0e8 100px 105px,#d5d9e2 105px 110px,#cbd0d8 110px 115px,#d8dde6 115px 120px,#c5cad3 120px 125px,#dadfea 125px 130px,#c7cbd7 130px 135px,#ced3df 135px 140px,#b1b5c1 140px 145px,#ced3de 145px 150px,#afb3bd 150px 155px,#abafb8 155px 160px,#c9cdd6 160px 165px,#bfc3cc 165px 170px)"></div><div class="r" style="left:0;top:15px;width:170px;height:5px;background:linear-gradient(90deg,#9fabbd 0px 5px,#bcc8da 5px 10px,#8f9bac 10px 15px,#8c97a8 15px 20px,#909aac 20px 25px,#8d97a9 25px 30px,#7f889b 30px 35px,#828b9f 35px 40px,#909aae 40px 45px,#909cb0 45px 50px,#7f8ba0 50px 55px,#939eb3 55px 60px,#9ca7bb 60px 65px,#959fb2 65px 70px,#b0bacb 70px 75px,#a4adbe 75px 80px,#c5cddc 80px 85px,#bdc4d1 85px 90px,#c0c6d1 90px 95px,#b9bec8 95px 100px,#c2c8d1 100px 105px,#a5aab4 105px 110px,#b5bac4 110px 115px,#cfd5de 115px 120px,#a3a9b3 120px 125px,#d2d7e3 125px 130px,#a5aab7 130px 135px,#cbd0de 135px 140px,#b3b8c5 140px 145px,#d1d6e2 145px 150px,#c9ced9 150px 155px,#b0b4bf 155px 160px,#e0e4ef 160px 165px,#e3e7f2 165px 170px)"></div><div class="r" style="left:0;top:20px;width:170px;height:5px;background:linear-gradient(90deg,#95a1b3 0px 5px,#929eb1 5px 10px,#909cae 10px 15px,#7c879a 15px 20px,#8c95a8 20px 25px,#6f778b 25px 30px,#6d7488 30px 35px,#6b7388 35px 40px,#727c91 40px 45px,#707b90 45px 50px,#95a1b7 50px 55px,#8c97ad 55px 60px,#a4afc4 60px 65px,#a0abbf 65px 70px,#9ea9bc 70px 75px,#aab3c5 75px 80px,#aab3c2 80px 85px,#b7bfcc 85px 90px,#b5bcc8 90px 95px,#b9c0ca 95px 100px,#aab0bb 100px 105px,#b5bbc6 105px 110px,#dfe5f0 110px 115px,#bac0cb 115px 120px,#b1b7c3 120px 125px,#c4cbd7 125px 130px,#d2d9e6 130px 135px,#a2a8b7 135px 140px,#b8becc 140px 145px,#b5bac8 145px 150px,#a6abb8 150px 155px,#d3d7e4 155px 160px,#c8ccd9 160px 165px,#c9cdda 165px 170px)"></div><div class="r" style="left:0;top:25px;width:170px;height:5px;background:linear-gradient(90deg,#8591a4 0px 5px,#95a1b4 5px 10px,#838fa2 10px 15px,#7c8599 15px 20px,#656d81 20px 25px,#585e73 25px 30px,#666b81 30px 35px,#5e657b 35px 40px,#6f778e 40px 45px,#747f95 45px 50px,#78849c 50px 55px,#818da4 55px 60px,#9aa6bb 60px 65px,#97a3b8 65px 70px,#a3afc2 70px 75px,#acb7c9 75px 80px,#c1cbdc 80px 85px,#bec7d5 85px 90px,#bdc5d2 90px 95px,#b1b9c4 95px 100px,#a6adb9 100px 105px,#cdd5e0 105px 110px,#cfd7e2 110px 115px,#bfc6d2 115px 120px,#c6ceda 120px 125px,#c6cedb 125px 130px,#c3cbd9 130px 135px,#c1c8d8 135px 140px,#afb6c5 140px 145px,#d3d8e8 145px 150px,#abb0bf 150px 155px,#d1d6e5 155px 160px,#cdd1e0 160px 165px,#d3d7e6 165px 170px)"></div><div class="r" style="left:0;top:30px;width:170px;height:5px;background:linear-gradient(90deg,#98a2b7 0px 5px,#939eb2 5px 10px,#6f798e 10px 15px,#5d667b 15px 20px,#6b7287 20px 25px,#4e5369 25px 30px,#4d5167 30px 35px,#5f647b 35px 40px,#515970 40px 45px,#555e77 45px 50px,#78839d 50px 55px,#808ba4 55px 60px,#8792ab 60px 65px,#96a1b8 65px 70px,#939eb5 70px 75px,#909ab0 75px 80px,#a8b2c5 80px 85px,#a0a9ba 85px 90px,#99a2b0 90px 95px,#bdc6d3 95px 100px,#b7bfcc 100px 105px,#c0c8d5 105px 110px,#acb4c1 110px 115px,#b2bac7 115px 120px,#a8afbd 120px 125px,#a4acbb 125px 130px,#afb7c7 130px 135px,#9ca3b4 135px 140px,#b1b8c9 140px 145px,#b7bdce 145px 150px,#d7ddee 150px 155px,#a7acbd 155px 160px,#ced3e4 160px 165px,#bec3d4 165px 170px)"></div><div class="r" style="left:0;top:35px;width:170px;height:5px;background:linear-gradient(90deg,#6d758b 0px 5px,#5d667c 5px 10px,#646d82 10px 15px,#676e84 15px 20px,#565c71 20px 25px,#4e5368 25px 30px,#44485d 30px 35px,#595f76 35px 40px,#595f78 40px 45px,#4d546f 45px 50px,#656e8a 50px 55px,#616a86 55px 60px,#5a637f 60px 65px,#878fab 65px 70px,#abb4d0 70px 75px,#a0a9c3 75px 80px,#939cb3 80px 85px,#9ba4b8 85px 90px,#bec7d8 90px 95px,#b3bccb 95px 100px,#b4bdcb 100px 105px,#b4bdcb 105px 110px,#b8c0ce 110px 115px,#c5cddb 115px 120px,#b8c0cf 120px 125px,#aab2c2 125px 130px,#9097a9 130px 135px,#9da4b7 135px 140px,#9399ac 140px 145px,#b5bbce 145px 150px,#9aa0b3 150px 155px,#b3b9cc 155px 160px,#b9bed1 160px 165px,#a4a9bc 165px 170px)"></div><div class="r" style="left:0;top:40px;width:170px;height:5px;background:linear-gradient(90deg,#686f86 0px 5px,#666d83 5px 10px,#52596f 10px 15px,#565c72 15px 20px,#4d5267 20px 25px,#303449 25px 30px,#41455a 30px 35px,#474c64 35px 40px,#525771 40px 45px,#505673 45px 50px,#616887 50px 55px,#6d7494 55px 60px,#888faf 60px 65px,#8a91b1 65px 70px,#9198b9 70px 75px,#aeb5d4 75px 80px,#969eb9 80px 85px,#9da6bd 85px 90px,#8d97aa 90px 95px,#c3cede 95px 100px,#bdc7d7 100px 105px,#bfc8d7 105px 110px,#bdc6d5 110px 115px,#b6bdcc 115px 120px,#abb3c3 120px 125px,#99a0b2 125px 130px,#8f95a8 130px 135px,#868ca1 135px 140px,#a1a7bc 140px 145px,#a0a6bb 145px 150px,#a2a8bd 150px 155px,#a5abc0 155px 160px,#a8aec4 160px 165px,#cad1e6 165px 170px)"></div><div class="r" style="left:0;top:45px;width:170px;height:5px;background:linear-gradient(90deg,#484d65 0px 5px,#454a61 5px 10px,#41455d 10px 15px,#383c53 15px 20px,#3c4156 20px 25px,#3f4458 25px 30px,#35394e 30px 35px,#3f435b 35px 40px,#474c67 40px 45px,#535776 45px 50px,#4b5072 50px 55px,#64698c 55px 60px,#696d91 60px 65px,#898eb2 65px 70px,#8085ab 70px 75px,#9aa0c3 75px 80px,#acb4d3 80px 85px,#98a1bc 85px 90px,#9aa4ba 90px 95px,#aab5c8 95px 100px,#a9b4c6 100px 105px,#9da7b8 105px 110px,#b6bfcf 110px 115px,#ced6e6 115px 120px,#9da4b6 120px 125px,#9096a9 125px 130px,#777c91 130px 135px,#787d94 135px 140px,#70758c 140px 145px,#7e839a 145px 150px,#aab1c8 150px 155px,#98a0b7 155px 160px,#bbc2d9 160px 165px,#c1c9e0 165px 170px)"></div><div class="r" style="left:0;top:50px;width:170px;height:5px;background:linear-gradient(90deg,#393d54 0px 5px,#3b3f56 5px 10px,#43475f 10px 15px,#34384f 15px 20px,#30344a 20px 25px,#2a2e43 25px 30px,#33374c 30px 35px,#454962 35px 40px,#4b4f6b 40px 45px,#444868 45px 50px,#4c5075 50px 55px,#5b5f84 55px 60px,#6f739a 60px 65px,#767aa1 65px 70px,#878bb4 70px 75px,#9196bb 75px 80px,#8e95b6 80px 85px,#98a0bd 85px 90px,#a1abc3 90px 95px,#a0acc0 95px 100px,#a9b4c7 100px 105px,#bdc7d9 105px 110px,#abb4c5 110px 115px,#a2aaba 115px 120px,#7e8597 120px 125px,#8d92a7 125px 130px,#656a80 130px 135px,#5f637c 135px 140px,#82879f 140px 145px,#8f94ad 145px 150px,#9198b1 150px 155px,#888fa9 155px 160px,#a0a8c1 160px 165px,#9ca3bc 165px 170px)"></div><div class="r" style="left:0;top:55px;width:170px;height:5px;background:linear-gradient(90deg,#33374e 0px 5px,#3d4158 5px 10px,#30344b 10px 15px,#2a2e44 15px 20px,#272b41 20px 25px,#2d3147 25px 30px,#2d3147 30px 35px,#2f334d 35px 40px,#404462 40px 45px,#3e4264 45px 50px,#5a5e83 50px 55px,#666a91 55px 60px,#74789f 60px 65px,#6f739b 65px 70px,#878bb4 70px 75px,#878cb3 75px 80px,#8990b2 80px 85px,#8f98b6 85px 90px,#8892ab 90px 95px,#8793a8 95px 100px,#a3adc1 100px 105px,#929bad 105px 110px,#939bac 110px 115px,#999faf 115px 120px,#707688 120px 125px,#757a8f 125px 130px,#797d94 130px 135px,#747891 135px 140px,#757a93 140px 145px,#9297b2 145px 150px,#959ab5 150px 155px,#8d93ae 155px 160px,#959cb7 160px 165px,#aeb5d0 165px 170px)"></div><div class="r" style="left:0;top:60px;width:170px;height:5px;background:linear-gradient(90deg,#292d44 0px 5px,#1c2037 5px 10px,#2f3349 10px 15px,#2b2f46 15px 20px,#30344a 20px 25px,#272b41 25px 30px,#292d44 30px 35px,#2b2f4a 35px 40px,#4d5170 40px 45px,#424669 45px 50px,#5a5e84 50px 55px,#52567d 55px 60px,#666a92 60px 65px,#5e628b 65px 70px,#787ca6 70px 75px,#9196be 75px 80px,#7a81a4 80px 85px,#9ea7c6 85px 90px,#9aa5bf 90px 95px,#8893a9 95px 100px,#8891a6 100px 105px,#80899c 105px 110px,#7d8496 110px 115px,#717687 115px 120px,#6c7184 120px 125px,#70758a 125px 130px,#676c83 130px 135px,#636781 135px 140px,#7a7e99 140px 145px,#9095b1 145px 150px,#7c819e 150px 155px,#9ca1be 155px 160px,#979cb9 160px 165px,#9297b4 165px 170px)"></div><div class="r" style="left:0;top:65px;width:170px;height:5px;background:linear-gradient(90deg,#23273d 0px 5px,#1c2037 5px 10px,#272b41 10px 15px,#1d2138 15px 20px,#24283f 20px 25px,#23273e 25px 30px,#22263e 30px 35px,#323652 35px 40px,#363a5a 40px 45px,#44486c 45px 50px,#484c73 50px 55px,#4a4e76 55px 60px,#5f638c 60px 65px,#6d719b 65px 70px,#8488b3 70px 75px,#767ba3 75px 80px,#868db1 80px 85px,#767e9e 85px 90px,#9aa5c0 90px 95px,#828ea4 95px 100px,#6e788d 100px 105px,#777f92 105px 110px,#777d8f 110px 115px,#535768 115px 120px,#5b5f72 120px 125px,#62667c 125px 130px,#62667f 130px 135px,#767a96 135px 140px,#727692 140px 145px,#7c819e 145px 150px,#979bb9 150px 155px,#8f93b2 155px 160px,#a3a7c6 160px 165px,#8f94b3 165px 170px)"></div><div class="r" style="left:0;top:70px;width:170px;height:5px;background:linear-gradient(90deg,#14182e 0px 5px,#11152b 5px 10px,#23273d 10px 15px,#1b1f35 15px 20px,#1f233a 20px 25px,#20243b 25px 30px,#23273f 30px 35px,#2b2f4b 35px 40px,#3f4362 40px 45px,#33375a 45px 50px,#363a61 50px 55px,#454972 55px 60px,#4d517b 60px 65px,#6e729d 65px 70px,#7c80ac 70px 75px,#6f749e 75px 80px,#6f769c 80px 85px,#818aab 85px 90px,#9da8c4 90px 95px,#657089 95px 100px,#818aa1 100px 105px,#61697d 105px 110px,#686e80 110px 115px,#4a4e5e 115px 120px,#585c70 120px 125px,#53576f 125px 130px,#5f637e 130px 135px,#8084a2 135px 140px,#8488a7 140px 145px,#7f83a2 145px 150px,#8387a6 150px 155px,#7e82a2 155px 160px,#969aba 160px 165px,#9b9fbf 165px 170px)"></div><div class="r" style="left:0;top:75px;width:170px;height:5px;background:linear-gradient(90deg,#161a30 0px 5px,#161a30 5px 10px,#12162c 10px 15px,#191d33 15px 20px,#1b1f35 20px 25px,#23273d 25px 30px,#282c44 30px 35px,#252944 35px 40px,#282c4b 40px 45px,#33375a 45px 50px,#363a60 50px 55px,#40446c 55px 60px,#525680 60px 65px,#545884 65px 70px,#7175a3 70px 75px,#7176a3 75px 80px,#7a81aa 80px 85px,#7a83a7 85px 90px,#7983a3 90px 95px,#747f9b 95px 100px,#6f7891 100px 105px,#5e657b 105px 110px,#585d70 110px 115px,#4a4e5f 115px 120px,#474b60 120px 125px,#5d617a 125px 130px,#575b79 130px 135px,#676b8d 135px 140px,#75799a 140px 145px,#696d8e 145px 150px,#8e92b3 150px 155px,#9a9ebe 155px 160px,#999dbd 160px 165px,#969aba 165px 170px)"></div><div class="r" style="left:0;top:80px;width:170px;height:5px;background:linear-gradient(90deg,#12162b 0px 5px,#101428 5px 10px,#13172c 10px 15px,#14182d 15px 20px,#181c32 20px 25px,#14182e 25px 30px,#1c2037 30px 35px,#222641 35px 40px,#262a48 40px 45px,#2b2f50 45px 50px,#373b60 50px 55px,#32365e 55px 60px,#4e527d 60px 65px,#595d8a 65px 70px,#656999 70px 75px,#6e73a2 75px 80px,#686e99 80px 85px,#7179a0 85px 90px,#818aae 90px 95px,#7c86a6 95px 100px,#6b738f 100px 105px,#4d536b 105px 110px,#51566a 110px 115px,#4a4e5f 115px 120px,#54586e 120px 125px,#585c77 125px 130px,#515575 130px 135px,#74789e 135px 140px,#74789d 140px 145px,#62668a 145px 150px,#9195b7 150px 155px,#8387a7 155px 160px,#898dad 160px 165px,#9397b7 165px 170px)"></div><div class="r" style="left:0;top:85px;width:170px;height:5px;background:linear-gradient(90deg,#161a2e 0px 5px,#0f1327 5px 10px,#12162b 10px 15px,#1a1e33 15px 20px,#1b1f34 20px 25px,#15192f 25px 30px,#161a31 30px 35px,#171b34 35px 40px,#1e223f 40px 45px,#292d4e 45px 50px,#2e3256 50px 55px,#383c63 55px 60px,#4b4f79 60px 65px,#484c7a 65px 70px,#5a5e90 70px 75px,#696e9f 75px 80px,#6d73a1 80px 85px,#777fa9 85px 90px,#757ea5 90px 95px,#6a7497 95px 100px,#636b89 100px 105px,#495069 105px 110px,#373c51 110px 115px,#3c4051 115px 120px,#44485f 120px 125px,#535774 125px 130px,#4b4f73 130px 135px,#636791 135px 140px,#6c7099 140px 145px,#75799e 145px 150px,#6e7295 150px 155px,#9296b7 155px 160px,#a8accc 160px 165px,#a1a5c5 165px 170px)"></div><div class="r" style="left:0;top:90px;width:170px;height:5px;background:linear-gradient(90deg,#0c0f23 0px 5px,#0e1126 5px 10px,#111529 10px 15px,#05091e 15px 20px,#101429 20px 25px,#14182e 25px 30px,#171a31 30px 35px,#20243d 35px 40px,#222642 40px 45px,#232746 45px 50px,#272b4d 50px 55px,#34395e 55px 60px,#363b63 60px 65px,#454975 65px 70px,#585c8c 70px 75px,#696e9d 75px 80px,#585f8a 80px 85px,#5d648d 85px 90px,#636c91 90px 95px,#6d7597 95px 100px,#535a77 100px 105px,#535971 105px 110px,#35394d 110px 115px,#313545 115px 120px,#3c4057 120px 125px,#505471 125px 130px,#5f6386 130px 135px,#51567f 135px 140px,#636890 140px 145px,#7e83a8 145px 150px,#7f83a6 150px 155px,#7f84a5 155px 160px,#a7abcb 160px 165px,#9fa4c4 165px 170px)"></div><div class="r" style="left:0;top:95px;width:170px;height:5px;background:linear-gradient(90deg,#0d1024 0px 5px,#090d21 5px 10px,#0f1227 10px 15px,#0c0f24 15px 20px,#12152a 20px 25px,#0b0f24 25px 30px,#0d1027 30px 35px,#151931 35px 40px,#151933 40px 45px,#1f2340 45px 50px,#212544 50px 55px,#222749 55px 60px,#31375b 60px 65px,#373d65 65px 70px,#4b507b 70px 75px,#434973 75px 80px,#474d74 80px 85px,#575e82 85px 90px,#626a8a 90px 95px,#5e6582 95px 100px,#454b64 100px 105px,#3e4358 105px 110px,#3d4152 110px 115px,#2d303e 115px 120px,#32354a 120px 125px,#444862 125px 130px,#515676 130px 135px,#50557c 135px 140px,#545a7f 140px 145px,#63688c 145px 150px,#898eb1 150px 155px,#848aab 155px 160px,#9297b7 160px 165px,#969cbc 165px 170px)"></div><div class="r" style="left:0;top:100px;width:170px;height:5px;background:linear-gradient(90deg,#0a0d22 0px 5px,#070a1f 5px 10px,#0a0d22 10px 15px,#07091e 15px 20px,#090c21 20px 25px,#080b20 25px 30px,#11142a 30px 35px,#10132b 35px 40px,#10142d 40px 45px,#151934 45px 50px,#181e3a 50px 55px,#242a48 55px 60px,#1e2445 60px 65px,#292f52 65px 70px,#343b61 70px 75px,#4c5378 75px 80px,#42486a 80px 85px,#3b4160 85px 90px,#414763 90px 95px,#494f68 95px 100px,#34394f 100px 105px,#2f3345 105px 110px,#333645 110px 115px,#2c2e3b 115px 120px,#373a4d 120px 125px,#383d55 125px 130px,#555a78 130px 135px,#5e6488 135px 140px,#62698c 140px 145px,#73799c 145px 150px,#62698a 150px 155px,#9198b8 155px 160px,#8c92b2 160px 165px,#949bbb 165px 170px)"></div><div class="r" style="left:0;top:105px;width:170px;height:5px;background:linear-gradient(90deg,#080a1f 0px 5px,#05071c 5px 10px,#010318 10px 15px,#080a1f 15px 20px,#05071d 20px 25px,#07091f 25px 30px,#070920 30px 35px,#0b0e24 35px 40px,#060a21 40px 45px,#161b33 45px 50px,#151a33 50px 55px,#1e243f 55px 60px,#29304d 60px 65px,#252c4b 65px 70px,#1f2748 70px 75px,#262e4e 75px 80px,#242a47 80px 85px,#272d47 85px 90px,#2a2f46 90px 95px,#1d2236 95px 100px,#292d3f 100px 105px,#1e2131 105px 110px,#262935 110px 115px,#242631 115px 120px,#2b2e3f 120px 125px,#35394f 125px 130px,#3a405b 130px 135px,#414869 135px 140px,#454d6e 140px 145px,#646c8c 145px 150px,#8990b1 150px 155px,#9ca4c4 155px 160px,#9aa2c2 160px 165px,#929aba 165px 170px)"></div><div class="r" style="left:0;top:110px;width:170px;height:5px;background:linear-gradient(90deg,#020419 0px 5px,#080a1f 5px 10px,#04061b 10px 15px,#05071c 15px 20px,#05071c 20px 25px,#07091e 25px 30px,#06081e 30px 35px,#090c22 35px 40px,#080b22 40px 45px,#0c1128 45px 50px,#191e36 50px 55px,#141a33 55px 60px,#171e38 60px 65px,#202743 65px 70px,#262d4b 70px 75px,#1c2440 75px 80px,#202641 80px 85px,#252a42 85px 90px,#20243a 90px 95px,#1e2235 95px 100px,#26293a 100px 105px,#1b1f2d 105px 110px,#1f222f 110px 115px,#1e202c 115px 120px,#303444 120px 125px,#23293d 125px 130px,#333952 130px 135px,#3b4360 135px 140px,#535b7a 140px 145px,#636b8a 145px 150px,#7c84a3 150px 155px,#6a7292 155px 160px,#8c94b4 160px 165px,#7f87a7 165px 170px)"></div><div class="r" style="left:0;top:115px;width:170px;height:5px;background:linear-gradient(90deg,#020319 0px 5px,#05071c 5px 10px,#010318 10px 15px,#000015 15px 20px,#04061b 20px 25px,#010318 25px 30px,#04061b 30px 35px,#090c21 35px 40px,#0b0e24 40px 45px,#11152b 45px 50px,#0c1228 50px 55px,#0a1027 55px 60px,#111730 60px 65px,#141a34 65px 70px,#161d37 70px 75px,#1e253f 75px 80px,#181e36 80px 85px,#11162c 85px 90px,#1c2035 90px 95px,#181b2f 95px 100px,#1a1e30 100px 105px,#1a1e2d 105px 110px,#1d212e 110px 115px,#1c202c 115px 120px,#292e3e 120px 125px,#2d3346 125px 130px,#343b52 130px 135px,#3c445e 135px 140px,#3b435f 140px 145px,#555d7a 145px 150px,#636b89 150px 155px,#777f9f 155px 160px,#6a7292 160px 165px,#8e96b6 165px 170px)"></div><div class="r" style="left:0;top:120px;width:170px;height:5px;background:linear-gradient(90deg,#03051a 0px 5px,#000117 5px 10px,#000015 10px 15px,#03041a 15px 20px,#04061b 20px 25px,#020419 25px 30px,#05071c 30px 35px,#04071c 35px 40px,#0a0d22 40px 45px,#070b20 45px 50px,#0b0f25 50px 55px,#11162c 55px 60px,#1a2036 60px 65px,#0e142c 65px 70px,#131a32 70px 75px,#121830 75px 80px,#181e34 80px 85px,#0f1429 85px 90px,#101529 90px 95px,#121629 95px 100px,#0f1425 100px 105px,#111525 105px 110px,#141827 110px 115px,#0f1421 115px 120px,#181d2d 120px 125px,#23293c 125px 130px,#2d3449 130px 135px,#323a51 135px 140px,#333b55 140px 145px,#4b536f 145px 150px,#666e8b 150px 155px,#737b9a 155px 160px,#727a9a 160px 165px,#687090 165px 170px)"></div><div class="r" style="left:0;top:125px;width:170px;height:5px;background:linear-gradient(90deg,#04061b 0px 5px,#010218 5px 10px,#000116 10px 15px,#010218 15px 20px,#07091e 20px 25px,#04061b 25px 30px,#07091e 30px 35px,#04061a 35px 40px,#090c20 40px 45px,#05091d 45px 50px,#080c20 50px 55px,#12172c 55px 60px,#0e1328 60px 65px,#0c1126 65px 70px,#0f152a 70px 75px,#10162b 75px 80px,#13182d 80px 85px,#0b1025 85px 90px,#060a1f 90px 95px,#0b0f23 95px 100px,#0e1325 100px 105px,#101525 105px 110px,#171c2b 110px 115px,#151b29 115px 120px,#1e2434 120px 125px,#1b2233 125px 130px,#2b3346 130px 135px,#3a4256 135px 140px,#40485f 140px 145px,#4a526c 145px 150px,#58607d 150px 155px,#777f9e 155px 160px,#606888 160px 165px,#697191 165px 170px)"></div><div class="r" style="left:0;top:130px;width:170px;height:5px;background:linear-gradient(90deg,#04051b 0px 5px,#04051c 5px 10px,#010218 10px 15px,#03051a 15px 20px,#020419 20px 25px,#03051a 25px 30px,#030519 30px 35px,#010318 35px 40px,#05081c 40px 45px,#080c20 45px 50px,#04071c 50px 55px,#070b20 55px 60px,#0b1024 60px 65px,#070c20 65px 70px,#0c1226 70px 75px,#080d22 75px 80px,#0f1428 80px 85px,#12162b 85px 90px,#101428 90px 95px,#090d20 95px 100px,#0e1224 100px 105px,#0d1223 105px 110px,#0f1424 110px 115px,#171d2b 115px 120px,#111727 120px 125px,#222839 125px 130px,#22293c 130px 135px,#30384b 135px 140px,#363e53 140px 145px,#3c445c 145px 150px,#515973 150px 155px,#636b88 155px 160px,#616987 160px 165px,#656d8b 165px 170px)"></div><div class="r" style="left:0;top:135px;width:170px;height:5px;background:linear-gradient(90deg,#010218 0px 5px,#000014 5px 10px,#05061c 10px 15px,#04061b 15px 20px,#03041a 20px 25px,#03051a 25px 30px,#06081d 30px 35px,#020519 35px 40px,#02051a 40px 45px,#04071c 45px 50px,#090d21 50px 55px,#02061b 55px 60px,#0b0f25 60px 65px,#060b20 65px 70px,#060a20 70px 75px,#0e1228 75px 80px,#090d22 80px 85px,#04081d 85px 90px,#070a1f 90px 95px,#0b0f22 95px 100px,#0e1224 100px 105px,#0a0e20 105px 110px,#0e1324 110px 115px,#121726 115px 120px,#121728 120px 125px,#1b2233 125px 130px,#1f2638 130px 135px,#21293c 135px 140px,#2c3448 140px 145px,#3b4359 145px 150px,#464e66 150px 155px,#4c546e 155px 160px,#515974 160px 165px,#5f6782 165px 170px)"></div><div class="r" style="left:0;top:140px;width:170px;height:5px;background:linear-gradient(90deg,#02031a 0px 5px,#04051c 5px 10px,#05061d 10px 15px,#04051b 15px 20px,#080a20 20px 25px,#000217 25px 30px,#04071c 30px 35px,#020419 35px 40px,#090b21 40px 45px,#090c21 45px 50px,#000217 50px 55px,#02051b 55px 60px,#080b21 60px 65px,#090d23 65px 70px,#0a0e24 70px 75px,#070b21 75px 80px,#080c22 80px 85px,#090c21 85px 90px,#060a1e 90px 95px,#0a0d21 95px 100px,#010518 100px 105px,#0c1022 105px 110px,#070c1d 110px 115px,#101526 115px 120px,#111627 120px 125px,#13192a 125px 130px,#1d2435 130px 135px,#1c2435 135px 140px,#242c3f 140px 145px,#293145 145px 150px,#3d455b 150px 155px,#4b536a 155px 160px,#535b73 160px 165px,#495169 165px 170px)"></div><div class="r" style="left:0;top:145px;width:170px;height:5px;background:linear-gradient(90deg,#04051c 0px 5px,#02031a 5px 10px,#010219 10px 15px,#03051b 15px 20px,#05061c 20px 25px,#010319 25px 30px,#010319 30px 35px,#02041a 35px 40px,#03051b 40px 45px,#000319 45px 50px,#06091f 50px 55px,#02051c 55px 60px,#05081f 60px 65px,#02051c 65px 70px,#060921 70px 75px,#060a21 75px 80px,#04071d 80px 85px,#0b0e24 85px 90px,#06091e 90px 95px,#0b0e22 95px 100px,#0a0d20 100px 105px,#06091c 105px 110px,#080c1e 110px 115px,#0c1022 115px 120px,#0f1526 120px 125px,#141a2b 125px 130px,#171e2e 130px 135px,#141c2c 135px 140px,#232b3c 140px 145px,#1f2739 145px 150px,#373f52 150px 155px,#373f54 155px 160px,#3a4257 160px 165px,#3e465b 165px 170px)"></div><div class="r" style="left:0;top:150px;width:170px;height:5px;background:linear-gradient(90deg,#02031a 0px 5px,#000016 5px 10px,#000015 10px 15px,#000017 15px 20px,#000014 20px 25px,#000117 25px 30px,#06081e 30px 35px,#000117 35px 40px,#04061c 40px 45px,#000117 45px 50px,#03061c 50px 55px,#02051b 55px 60px,#03061d 60px 65px,#05081f 65px 70px,#090c24 70px 75px,#05081f 75px 80px,#05081e 80px 85px,#02041a 85px 90px,#06091e 90px 95px,#04071b 95px 100px,#090c1f 100px 105px,#070b1d 105px 110px,#0e1224 110px 115px,#030719 115px 120px,#0d1223 120px 125px,#151b2c 125px 130px,#141b2b 130px 135px,#161e2d 135px 140px,#1f2737 140px 145px,#1f2738 145px 150px,#2f3749 150px 155px,#454d60 155px 160px,#3f475a 160px 165px,#30384b 165px 170px)"></div><div class="r" style="left:0;top:155px;width:170px;height:5px;background:linear-gradient(90deg,#000017 0px 5px,#000118 5px 10px,#04051c 10px 15px,#000017 15px 20px,#000118 20px 25px,#04051c 25px 30px,#04061c 30px 35px,#010219 35px 40px,#000117 40px 45px,#000017 45px 50px,#000319 50px 55px,#000016 55px 60px,#05081f 60px 65px,#02041b 65px 70px,#05081f 70px 75px,#0a0c23 75px 80px,#080a20 80px 85px,#010419 85px 90px,#070a1e 90px 95px,#080b1f 95px 100px,#04071a 100px 105px,#04071a 105px 110px,#070b1e 110px 115px,#04081a 115px 120px,#121728 120px 125px,#070d1d 125px 130px,#0f1626 130px 135px,#171e2d 135px 140px,#1c2433 140px 145px,#242c3c 145px 150px,#2b3343 150px 155px,#2e3647 155px 160px,#394152 160px 165px,#242c3d 165px 170px)"></div><div class="r" style="left:0;top:160px;width:170px;height:5px;background:linear-gradient(90deg,#010219 0px 5px,#000118 5px 10px,#02031a 10px 15px,#02031a 15px 20px,#000017 20px 25px,#000118 25px 30px,#04051c 30px 35px,#03041b 35px 40px,#000219 40px 45px,#070a21 45px 50px,#080b22 50px 55px,#000018 55px 60px,#04061d 60px 65px,#0a0d24 65px 70px,#06081f 70px 75px,#05071d 75px 80px,#03061c 80px 85px,#03051a 85px 90px,#04071b 90px 95px,#03061a 95px 100px,#080b1f 100px 105px,#05091c 105px 110px,#060a1c 110px 115px,#05091b 115px 120px,#0c1022 120px 125px,#0c1121 125px 130px,#121827 130px 135px,#1a212f 135px 140px,#1c2332 140px 145px,#222939 145px 150px,#262e3e 150px 155px,#2a3242 155px 160px,#2b3343 160px 165px,#2a3242 165px 170px)"></div><div class="r" style="left:0;top:165px;width:170px;height:5px;background:linear-gradient(90deg,#04051c 0px 5px,#000017 5px 10px,#05061d 10px 15px,#02031a 15px 20px,#000017 20px 25px,#000118 25px 30px,#000118 30px 35px,#02031a 35px 40px,#000119 40px 45px,#05071e 45px 50px,#000119 50px 55px,#000015 55px 60px,#00021a 60px 65px,#000016 65px 70px,#03051c 70px 75px,#07091f 75px 80px,#06081e 80px 85px,#000318 85px 90px,#020519 90px 95px,#0a0d21 95px 100px,#060a1d 100px 105px,#060a1d 105px 110px,#0a0e21 110px 115px,#101426 115px 120px,#0f1425 120px 125px,#0e1324 125px 130px,#121827 130px 135px,#161c2b 135px 140px,#151c2a 140px 145px,#171e2c 145px 150px,#202736 150px 155px,#1f2735 155px 160px,#252d3c 160px 165px,#262e3c 165px 170px)"></div><div class="r" style="left:0;top:170px;width:170px;height:5px;background:linear-gradient(90deg,#080920 0px 5px,#000017 5px 10px,#010219 10px 15px,#010219 15px 20px,#03041b 20px 25px,#04051c 25px 30px,#000118 30px 35px,#000118 35px 40px,#000016 40px 45px,#000118 45px 50px,#03051d 50px 55px,#02041c 55px 60px,#000119 60px 65px,#02041a 65px 70px,#03051c 70px 75px,#05071d 75px 80px,#02051a 80px 85px,#03061b 85px 90px,#000216 90px 95px,#010418 95px 100px,#0a0e21 100px 105px,#000316 105px 110px,#060a1c 110px 115px,#090d1e 115px 120px,#090e1f 120px 125px,#0b1020 125px 130px,#101625 130px 135px,#131927 135px 140px,#161d2b 140px 145px,#121927 145px 150px,#1e2533 150px 155px,#1e2634 155px 160px,#212937 160px 165px,#252d3b 165px 170px)"></div><div class="r" style="left:0;top:175px;width:170px;height:5px;background:linear-gradient(90deg,#03041b 0px 5px,#04051c 5px 10px,#000118 10px 15px,#04051c 15px 20px,#05061d 20px 25px,#05061d 25px 30px,#05061d 30px 35px,#01021a 35px 40px,#01031a 40px 45px,#04061d 45px 50px,#000018 50px 55px,#03051c 55px 60px,#01031a 60px 65px,#02041a 65px 70px,#000016 70px 75px,#010319 75px 80px,#04061b 80px 85px,#07091e 85px 90px,#070a1e 90px 95px,#05081b 95px 100px,#05081c 100px 105px,#04071a 105px 110px,#080c1e 110px 115px,#070b1d 115px 120px,#0d1122 120px 125px,#141929 125px 130px,#101625 130px 135px,#0d1321 135px 140px,#131a28 140px 145px,#141b29 145px 150px,#19202e 150px 155px,#29313f 155px 160px,#252d3b 160px 165px,#1c2432 165px 170px)"></div></div>
<svg class="r" style="left:176px;top:18px" width="140" height="20" viewBox="-0.5 -0.5 140 20"><g fill="none" stroke="#e6e0b8" stroke-width="1"><path d="M0 0.5H18L22.3 4.7V12.7L18 17H0Z"/><path d="M2 2.5H17L20.3 5.7V11.7L17 15H2Z" stroke="#b8b090"/><path d="M7.8 3.9H17.6V13.7H7.8Z"/><path d="M10.6 6.6H15.3V11.3H10.6Z"/><path d="M24.3 9L29 4.7H47.4V17H29L24.3 12.5Z"/><path d="M28.5 10.5L30.5 8.6H41.7V13.4H30.5L28.5 11.8Z" stroke="#b0a8d0"/><path d="M41.7 4.7V17"/><path d="M52 17V4.7H69.7V8.5H56V17Z"/><path d="M68.1 0H72V17H68.1Z"/><path d="M72 10L86 4.7M72 10L88 17"/><path d="M89.3 17V1.6H112L116.7 5.5V9L112 11L116.7 17M112 11H93.3V17Z"/><path d="M94 4.7H108V8.5H94Z" stroke="#a8b8d8"/><path d="M117.5 0V17H134.7V13.5H121.5V0Z"/><path d="M136 13.5V17"/></g></svg>
<div class="r mono" style="left:172px;top:47px;width:148px;text-align:center;line-height:8px">Created by</div>
<div class="r mono" style="left:172px;top:56px;width:148px;text-align:center;line-height:5px">Bartosz Taudul<br>wolf.pld@gmail.com</div>
<div class="r mono" style="left:172px;top:102px;width:148px;text-align:center;line-height:8px">* [S]tart a new game *<br>[R]eplay an old game<br>Game [m]anual<br>[V]ideo options<br>[Q]uit game</div>
<div class="r mono" style="left:172px;top:169px;width:148px;text-align:center;line-height:8px;color:#707070">Version: 15c455ee76</div>
</div>
<div class="frame" style="left:832px;top:725px;width:240px;height:21px"></div>
<div class="r" style="left:919px;top:727px;width:10px;height:17px;background:#3d85e0;border-radius:1px"></div>
<div class="t" style="left:832px;top:729px;width:240px;text-align:center;letter-spacing:-0.230px;">261</div>
<div class="t" style="left:1076px;top:729px;letter-spacing:-0.097px;word-spacing:0.485px">Frame image</div>
<div class="frame" style="left:832px;top:750px;width:240px;height:21px"></div>
<div class="r" style="left:886px;top:752px;width:10px;height:17px;background:#3d85e0;border-radius:1px"></div>
<div class="t" style="left:832px;top:754px;width:240px;text-align:center;letter-spacing:-0.075px;">1.00</div>
<div class="t" style="left:1076px;top:754px;letter-spacing:0.064px;word-spacing:0.324px">Playback speed</div>
<div class="btn" style="left:832px;top:775px;width:21px;height:21px"></div>
<svg class="r" style="left:838px;top:781px" width="8" height="10" viewBox="0 0 8 10"><path d="M1 5L6 1V9Z" fill="#fff"/></svg>
<div class="btn" style="left:861px;top:775px;width:21px;height:21px"></div>
<svg class="r" style="left:868px;top:781px" width="8" height="10" viewBox="0 0 8 10"><path d="M7 5L2 1V9Z" fill="#fff"/></svg>
<div class="btn" style="left:890px;top:775px;width:68px;height:21px"></div>
<svg class="r" style="left:902px;top:779px" width="14" height="14" viewBox="0 0 14 14"><path d="M1 0.5L13 7L1 13.5Z" fill="#fff"/></svg>
<div class="t" style="left:919px;top:779px;letter-spacing:0.178px">Play</div>
<div class="frame" style="left:966px;top:775px;width:21px;height:21px"></div>
<div class="t" style="left:991px;top:779px;letter-spacing:0.109px;word-spacing:0.280px">Sync timeline</div>
<div class="frame" style="left:1078px;top:775px;width:21px;height:21px"></div>
<div class="t" style="left:1103px;top:779px;letter-spacing:-0.009px;word-spacing:0.397px">Zoom 2×</div>
<div class="t" style="left:833px;top:801px;letter-spacing:0.110px;color:#808080">Timestamp:</div>
<div class="t" style="left:909px;top:801px;letter-spacing:0.040px;word-spacing:0.349px">3.07 s</div>
<div class="t" style="left:961px;top:801px;letter-spacing:-0.028px;color:#808080">Frame:</div>
<div class="t" style="left:1010px;top:801px;letter-spacing:-0.230px">261</div>
<div class="t" style="left:1047px;top:801px;letter-spacing:0.173px;color:#808080">Ratio:</div>
<div class="t" style="left:1090px;top:801px;letter-spacing:-0.015px">51.57%</div></div>
</body></html>
